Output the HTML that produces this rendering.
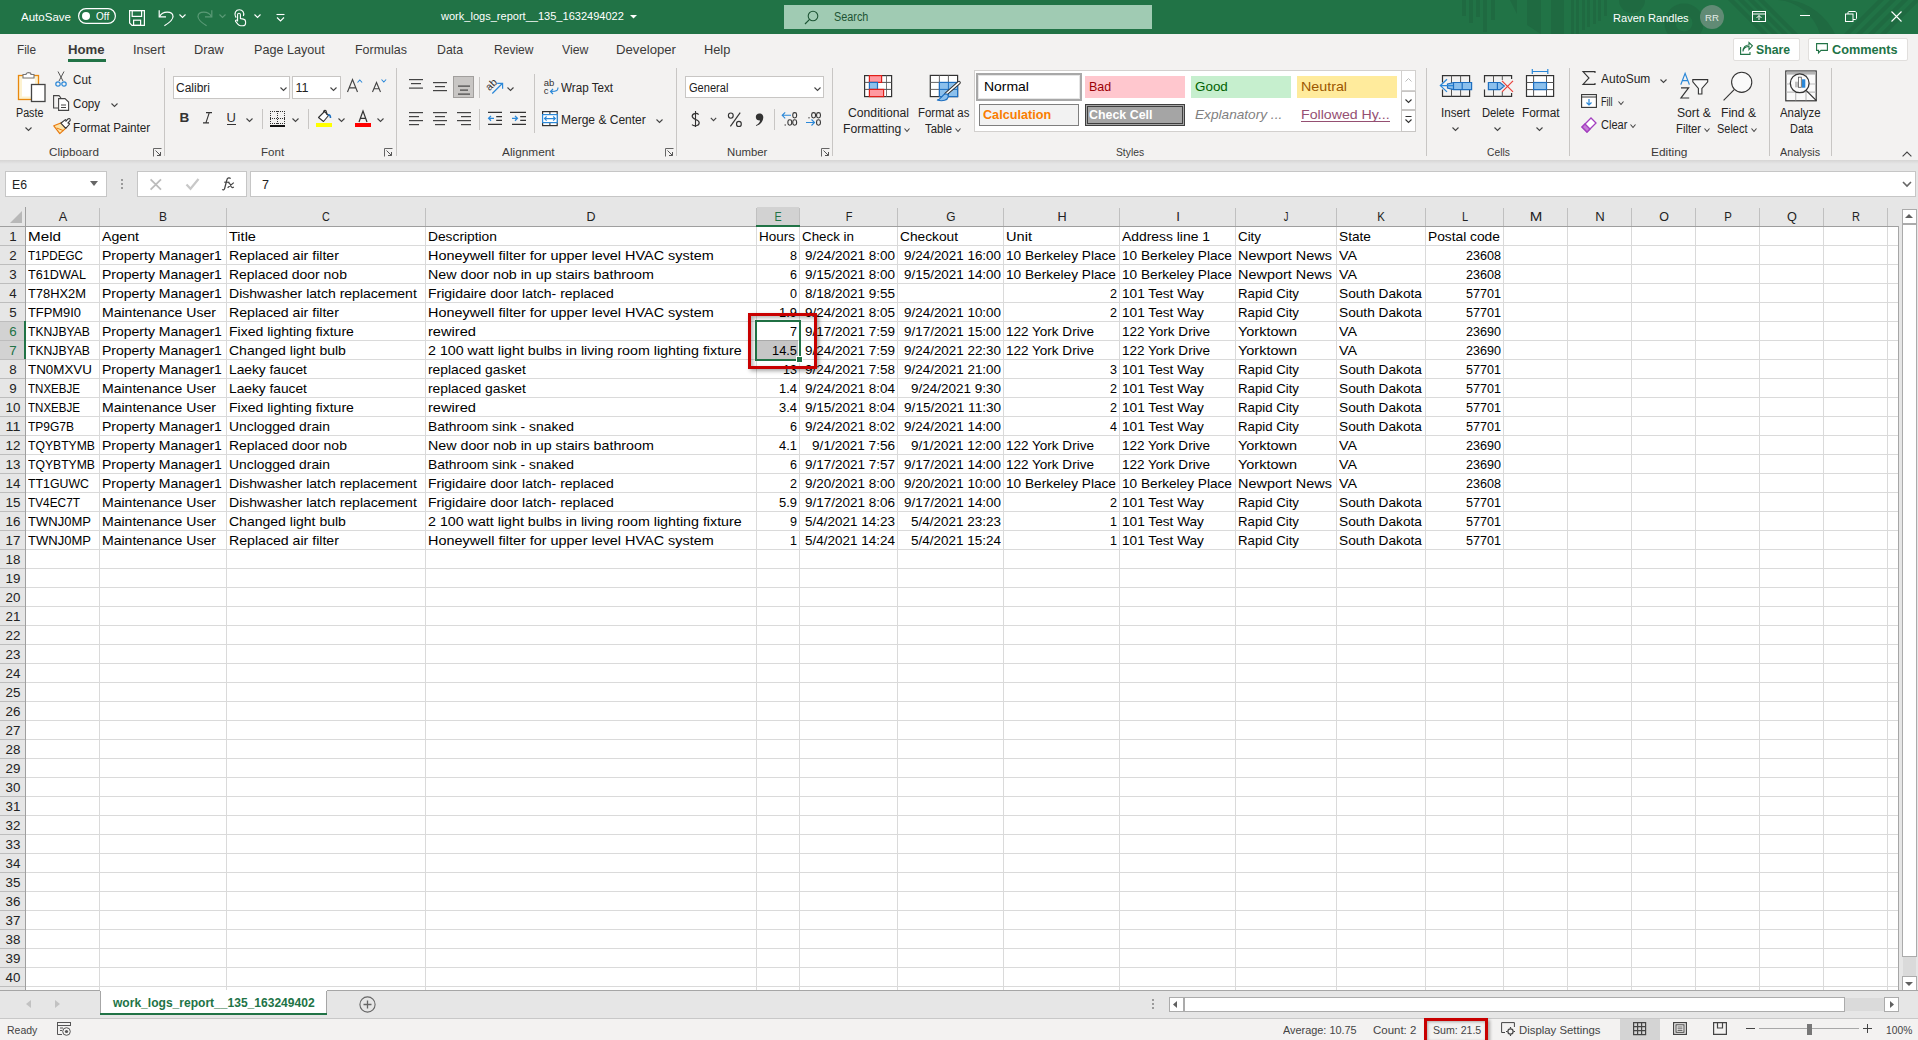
<!DOCTYPE html>
<html><head><meta charset="utf-8"><title>Excel</title>
<style>
html,body{margin:0;padding:0;}
body{width:1918px;height:1040px;overflow:hidden;position:relative;background:#e6e6e6;font-family:"Liberation Sans",sans-serif;}
.t{position:absolute;white-space:nowrap;}
.b{position:absolute;}
svg.b{overflow:visible;}
</style></head><body>

<div class="b" style="left:0px;top:0px;width:1918px;height:34px;background:#217346"></div>
<div class="b" style="left:0px;top:34px;width:1918px;height:126px;background:#f3f2f1"></div>
<div class="b" style="left:0px;top:160px;width:1918px;height:4px;background:linear-gradient(#d6d5d4,#e6e6e6)"></div>
<svg class="b" style="left:0;top:0" width="1918" height="34"><defs><clipPath id="tb"><rect x="0" y="0" width="1918" height="34"/></clipPath></defs><g clip-path="url(#tb)"><rect x="1462" y="0" width="4" height="16" fill="#1f6a41"/><rect x="1469" y="0" width="4" height="23" fill="#1f6a41"/><rect x="1476" y="0" width="4" height="17" fill="#1f6a41"/><rect x="1483" y="0" width="4" height="32" fill="#1f6a41"/><rect x="1491" y="0" width="4" height="20" fill="#1f6a41"/><polygon points="1510,0 1517,0 1517,14" fill="#1f6a41"/><polygon points="1527,0 1541,0 1541,34 1527,25" fill="#1f6a41"/><rect x="1551" y="0" width="13" height="34" fill="#1f6a41"/><rect x="1571" y="0" width="3" height="34" fill="#1f6a41"/><rect x="1576" y="0" width="3" height="34" fill="#1f6a41"/><rect x="1582" y="0" width="3" height="30" fill="#1f6a41"/><rect x="1587" y="0" width="3" height="27" fill="#1f6a41"/><rect x="1593" y="0" width="3" height="24" fill="#1f6a41"/><rect x="1598" y="0" width="3" height="21" fill="#1f6a41"/><rect x="1604" y="0" width="3" height="16" fill="#1f6a41"/><circle cx="1632" cy="0" r="13" fill="#1f6a41"/><circle cx="1684" cy="23" r="14" fill="none" stroke="#1f6a41" stroke-width="11"/><polygon points="1728,0 1734,0 1768,34 1762,34" fill="#1f6a41"/><polygon points="1738,0 1744,0 1778,34 1772,34" fill="#1f6a41"/><polygon points="1748,0 1754,0 1788,34 1782,34" fill="#1f6a41"/><polygon points="1758,0 1764,0 1798,34 1792,34" fill="#1f6a41"/><path d="M1790,0 A60,60 0 0 1 1835,34 L1820,34 A48,48 0 0 0 1778,0 Z" fill="#1f6a41"/><polygon points="1878,0 1884,0 1850,34 1844,34" fill="#1f6a41"/><polygon points="1890,0 1896,0 1862,34 1856,34" fill="#1f6a41"/><polygon points="1902,0 1908,0 1874,34 1868,34" fill="#1f6a41"/><polygon points="1914,0 1920,0 1886,34 1880,34" fill="#1f6a41"/></g></svg>
<div class="t" style="left:21.00px;top:7.48px;font-size:11.6px;line-height:20px;color:#ffffff;font-weight:normal;font-style:normal;transform:scaleX(0.9943);transform-origin:0 0;">AutoSave</div>
<svg class="b" style="left:78px;top:8px;" width="38" height="16" viewBox="0 0 38 16"><rect x="0.6" y="0.6" width="36.8" height="14.8" rx="7.4" fill="none" stroke="#fff" stroke-width="1.2"/><circle cx="8" cy="8" r="4" fill="#fff"/></svg>
<div class="t" style="left:96.00px;top:7.04px;font-size:10px;line-height:20px;color:#ffffff;font-weight:normal;font-style:normal;">Off</div>
<svg class="b" style="left:129px;top:10px;" width="17" height="17" viewBox="0 0 17 17"><path d="M0.6,0.6 H15.4 V15.4 H3 L0.6,13 Z" fill="none" stroke="#fff" stroke-width="1.2"/><rect x="3.2" y="0.6" width="9.4" height="5.8" fill="none" stroke="#fff" stroke-width="1.2"/><rect x="4.6" y="10.2" width="7" height="5.2" fill="none" stroke="#fff" stroke-width="1.2"/></svg>
<svg class="b" style="left:158px;top:9px;" width="17" height="18" viewBox="0 0 17 18"><path d="M1.2,1.2 V7.9 H8" fill="none" stroke="#fff" stroke-width="1.2"/><path d="M1.6,7.6 C4.5,1.5 14.8,1.8 15,7.4 C15.2,10.4 12.6,13 6.4,16.8" fill="none" stroke="#fff" stroke-width="1.2"/></svg>
<svg class="b" style="left:179px;top:14px;" width="7" height="4" viewBox="0 0 7 4"><path d="M0.5,0.5 L3.5,3.5 L6.5,0.5" fill="none" stroke="#fff" stroke-width="1.1"/></svg>
<svg class="b" style="left:197px;top:9px;" width="17" height="18" viewBox="0 0 17 18"><path d="M14.8,1.2 V7.9 H8" fill="none" stroke="#5a9a76" stroke-width="1.2"/><path d="M14.4,7.6 C11.5,1.5 1.2,1.8 1,7.4 C0.8,10.4 3.4,13 9.6,16.8" fill="none" stroke="#5a9a76" stroke-width="1.2"/></svg>
<svg class="b" style="left:219px;top:14px;" width="7" height="4" viewBox="0 0 7 4"><path d="M0.5,0.5 L3.5,3.5 L6.5,0.5" fill="none" stroke="#5a9a76" stroke-width="1.1"/></svg>
<svg class="b" style="left:233px;top:9px;" width="15" height="18" viewBox="0 0 15 18"><path d="M3.2,8.6 C0.4,4 3,0.8 6.4,0.8 C9.6,0.8 11.6,3.6 10.4,7" fill="none" stroke="#fff" stroke-width="1.1"/><path d="M4.6,12.4 V5.4 C4.6,3.8 7.4,3.8 7.4,5.4 V9.6 L10.4,10.1 C11.9,10.4 12.6,11.4 12.6,13 V14 C12.6,15.8 11.4,16.8 9.8,16.8 H7.6 C6.4,16.8 5.6,16.2 4.8,15.2 L2.6,12.4 C2,11.4 3.6,10.4 4.6,11.6" fill="none" stroke="#fff" stroke-width="1.1"/></svg>
<svg class="b" style="left:254px;top:14px;" width="7" height="4" viewBox="0 0 7 4"><path d="M0.5,0.5 L3.5,3.5 L6.5,0.5" fill="none" stroke="#fff" stroke-width="1.1"/></svg>
<svg class="b" style="left:276px;top:13px;" width="9" height="9" viewBox="0 0 9 9"><path d="M0.5,1.5 H8.5" stroke="#fff" stroke-width="1.1"/><path d="M1,4.5 L4.5,8 L8,4.5" fill="none" stroke="#fff" stroke-width="1.1"/></svg>
<div class="t" style="left:441.06px;top:6.21px;font-size:11.8px;line-height:20px;color:#ffffff;font-weight:normal;font-style:normal;transform:scaleX(0.9357);transform-origin:0 0;">work_logs_report__135_1632494022</div>
<svg class="b" style="left:630px;top:15px;" width="7" height="4" viewBox="0 0 7 4"><polygon points="0,0 7,0 3.5,3.5" fill="#fff"/></svg>
<div class="b" style="left:784px;top:5px;width:368px;height:24px;background:#a0cbb3"></div>
<svg class="b" style="left:804px;top:10px;" width="15" height="15" viewBox="0 0 15 15"><circle cx="9" cy="6" r="4.8" fill="none" stroke="#1d5434" stroke-width="1.1"/><path d="M5.6,9.4 L1,14" stroke="#1d5434" stroke-width="1.2"/></svg>
<div class="t" style="left:834.00px;top:7.34px;font-size:12px;line-height:20px;color:#1d5434;font-weight:normal;font-style:normal;transform:scaleX(0.9043);transform-origin:0 0;">Search</div>
<div class="t" style="left:1613.00px;top:7.98px;font-size:11.6px;line-height:20px;color:#ffffff;font-weight:normal;font-style:normal;transform:scaleX(0.9541);transform-origin:0 0;">Raven Randles</div>
<svg class="b" style="left:1700px;top:5px;" width="24" height="24" viewBox="0 0 24 24"><circle cx="12" cy="12" r="12" fill="#618b75"/></svg>
<div class="t" style="left:1512.00px;width:400px;text-align:center;top:7.67px;font-size:9.6px;line-height:20px;color:#e4ebe7;font-weight:normal;">RR</div>
<svg class="b" style="left:1752px;top:11px;" width="14" height="11" viewBox="0 0 14 11"><rect x="0.5" y="0.5" width="13" height="10" fill="none" stroke="#fff" stroke-width="1"/><path d="M0.5,3 H13.5" stroke="#fff" stroke-width="1"/><path d="M7,9 V4.5 M4.5,7 L7,4.5 L9.5,7" fill="none" stroke="#fff" stroke-width="1"/></svg>
<div class="b" style="left:1800px;top:15px;width:10px;height:1px;background:#fff"></div>
<svg class="b" style="left:1845px;top:11px;" width="12" height="11" viewBox="0 0 12 11"><rect x="0.5" y="3" width="7.5" height="7.5" fill="none" stroke="#fff" stroke-width="1"/><path d="M3,3 V1.5 C3,1 3.5,0.5 4,0.5 H10 C10.7,0.5 11.5,1.3 11.5,2 V7.5 C11.5,8 11,8.5 10.5,8.5 H8" fill="none" stroke="#fff" stroke-width="1"/></svg>
<svg class="b" style="left:1891px;top:11px;" width="11" height="11" viewBox="0 0 11 11"><path d="M0.5,0.5 L10.5,10.5 M10.5,0.5 L0.5,10.5" stroke="#fff" stroke-width="1.1"/></svg>
<div class="t" style="left:17.00px;top:39.56px;font-size:12.8px;line-height:20px;color:#3b3a39;font-weight:normal;font-style:normal;transform:scaleX(0.9220);transform-origin:0 0;">File</div>
<div class="t" style="left:132.60px;top:39.56px;font-size:12.8px;line-height:20px;color:#3b3a39;font-weight:normal;font-style:normal;transform:scaleX(1.0031);transform-origin:0 0;">Insert</div>
<div class="t" style="left:194.20px;top:39.56px;font-size:12.8px;line-height:20px;color:#3b3a39;font-weight:normal;font-style:normal;transform:scaleX(0.9971);transform-origin:0 0;">Draw</div>
<div class="t" style="left:254.00px;top:39.56px;font-size:12.8px;line-height:20px;color:#3b3a39;font-weight:normal;font-style:normal;transform:scaleX(0.9851);transform-origin:0 0;">Page Layout</div>
<div class="t" style="left:355.40px;top:39.56px;font-size:12.8px;line-height:20px;color:#3b3a39;font-weight:normal;font-style:normal;transform:scaleX(0.9742);transform-origin:0 0;">Formulas</div>
<div class="t" style="left:437.00px;top:39.56px;font-size:12.8px;line-height:20px;color:#3b3a39;font-weight:normal;font-style:normal;transform:scaleX(0.9604);transform-origin:0 0;">Data</div>
<div class="t" style="left:493.50px;top:39.56px;font-size:12.8px;line-height:20px;color:#3b3a39;font-weight:normal;font-style:normal;transform:scaleX(0.9408);transform-origin:0 0;">Review</div>
<div class="t" style="left:561.60px;top:39.56px;font-size:12.8px;line-height:20px;color:#3b3a39;font-weight:normal;font-style:normal;transform:scaleX(0.9593);transform-origin:0 0;">View</div>
<div class="t" style="left:616.00px;top:39.56px;font-size:12.8px;line-height:20px;color:#3b3a39;font-weight:normal;font-style:normal;transform:scaleX(1.0280);transform-origin:0 0;">Developer</div>
<div class="t" style="left:704.20px;top:39.56px;font-size:12.8px;line-height:20px;color:#3b3a39;font-weight:normal;font-style:normal;transform:scaleX(0.9998);transform-origin:0 0;">Help</div>
<div class="t" style="left:68.00px;top:39.56px;font-size:12.8px;line-height:20px;color:#3b3a39;font-weight:bold;font-style:normal;transform:scaleX(1.0286);transform-origin:0 0;">Home</div>
<div class="b" style="left:68px;top:59px;width:38px;height:3px;background:#217346"></div>
<div class="b" style="left:1733px;top:38px;width:65px;height:21px;background:#fff;border:1px solid #e1dfdd;border-radius:2px"></div>
<svg class="b" style="left:1740px;top:42px;" width="13" height="13" viewBox="0 0 13 13"><path d="M0.6,5 V12.4 H10 V10" fill="none" stroke="#217346" stroke-width="1.1"/><path d="M3,9.5 C3,6 6,4.5 9,4.5 V7.5 L12.4,3.8 L9,0.6 V3 C5.5,3 3,5.5 3,9.5 Z" fill="none" stroke="#217346" stroke-width="1.1"/></svg>
<div class="t" style="left:1756.00px;top:39.50px;font-size:13px;line-height:20px;color:#217346;font-weight:bold;font-style:normal;transform:scaleX(0.9408);transform-origin:0 0;">Share</div>
<div class="b" style="left:1808px;top:38px;width:98px;height:21px;background:#fff;border:1px solid #e1dfdd;border-radius:2px"></div>
<svg class="b" style="left:1816px;top:43px;" width="12" height="11" viewBox="0 0 12 11"><path d="M0.6,0.6 H11.4 V7.4 H5 L2.5,10 V7.4 H0.6 Z" fill="none" stroke="#217346" stroke-width="1.1"/></svg>
<div class="t" style="left:1832.00px;top:39.50px;font-size:13px;line-height:20px;color:#217346;font-weight:bold;font-style:normal;transform:scaleX(0.9775);transform-origin:0 0;">Comments</div>
<div class="b" style="left:164px;top:68px;width:1px;height:88px;background:#c8c6c4"></div>
<div class="b" style="left:396px;top:68px;width:1px;height:88px;background:#c8c6c4"></div>
<div class="b" style="left:676px;top:68px;width:1px;height:88px;background:#c8c6c4"></div>
<div class="b" style="left:832px;top:68px;width:1px;height:88px;background:#c8c6c4"></div>
<div class="b" style="left:1426px;top:68px;width:1px;height:88px;background:#c8c6c4"></div>
<div class="b" style="left:1569px;top:68px;width:1px;height:88px;background:#c8c6c4"></div>
<div class="b" style="left:1769px;top:68px;width:1px;height:88px;background:#c8c6c4"></div>
<div class="b" style="left:1831px;top:68px;width:1px;height:88px;background:#c8c6c4"></div>
<div class="t" style="left:48.75px;top:142.12px;font-size:11.2px;line-height:20px;color:#3b3a39;font-weight:normal;font-style:normal;transform:scaleX(1.0431);transform-origin:0 0;">Clipboard</div>
<div class="t" style="left:260.60px;top:142.12px;font-size:11.2px;line-height:20px;color:#3b3a39;font-weight:normal;font-style:normal;transform:scaleX(1.0313);transform-origin:0 0;">Font</div>
<div class="t" style="left:502.00px;top:142.12px;font-size:11.2px;line-height:20px;color:#3b3a39;font-weight:normal;font-style:normal;transform:scaleX(1.0586);transform-origin:0 0;">Alignment</div>
<div class="t" style="left:726.60px;top:142.12px;font-size:11.2px;line-height:20px;color:#3b3a39;font-weight:normal;font-style:normal;transform:scaleX(1.0147);transform-origin:0 0;">Number</div>
<div class="t" style="left:1115.50px;top:142.12px;font-size:11.2px;line-height:20px;color:#3b3a39;font-weight:normal;font-style:normal;transform:scaleX(0.9207);transform-origin:0 0;">Styles</div>
<div class="t" style="left:1486.60px;top:142.12px;font-size:11.2px;line-height:20px;color:#3b3a39;font-weight:normal;font-style:normal;transform:scaleX(0.9189);transform-origin:0 0;">Cells</div>
<div class="t" style="left:1651.30px;top:142.12px;font-size:11.2px;line-height:20px;color:#3b3a39;font-weight:normal;font-style:normal;transform:scaleX(1.0650);transform-origin:0 0;">Editing</div>
<div class="t" style="left:1780.40px;top:142.12px;font-size:11.2px;line-height:20px;color:#3b3a39;font-weight:normal;font-style:normal;transform:scaleX(0.9636);transform-origin:0 0;">Analysis</div>
<svg class="b" style="left:153px;top:148px;" width="9" height="9" viewBox="0 0 9 9"><path d="M0.5,8.5 V0.5 H8.5" fill="none" stroke="#666" stroke-width="1"/><path d="M2.5,2.5 L7.5,7.5 M4,7.5 H7.5 V4" fill="none" stroke="#555" stroke-width="1"/></svg>
<svg class="b" style="left:384px;top:148px;" width="9" height="9" viewBox="0 0 9 9"><path d="M0.5,8.5 V0.5 H8.5" fill="none" stroke="#666" stroke-width="1"/><path d="M2.5,2.5 L7.5,7.5 M4,7.5 H7.5 V4" fill="none" stroke="#555" stroke-width="1"/></svg>
<svg class="b" style="left:664.5px;top:148px;" width="9" height="9" viewBox="0 0 9 9"><path d="M0.5,8.5 V0.5 H8.5" fill="none" stroke="#666" stroke-width="1"/><path d="M2.5,2.5 L7.5,7.5 M4,7.5 H7.5 V4" fill="none" stroke="#555" stroke-width="1"/></svg>
<svg class="b" style="left:821px;top:148px;" width="9" height="9" viewBox="0 0 9 9"><path d="M0.5,8.5 V0.5 H8.5" fill="none" stroke="#666" stroke-width="1"/><path d="M2.5,2.5 L7.5,7.5 M4,7.5 H7.5 V4" fill="none" stroke="#555" stroke-width="1"/></svg>
<svg class="b" style="left:17px;top:71px;" width="30" height="32" viewBox="0 0 30 32"><rect x="1.5" y="4.5" width="20" height="24" fill="#fdf2d0" stroke="#e8880e" stroke-width="1.3"/><rect x="5" y="7.5" width="13" height="18" fill="#fff"/><path d="M6,7 V3.5 H9 C9,1 14,1 14,3.5 H17 V7 Z" fill="#fff" stroke="#777" stroke-width="1.1"/><rect x="14.5" y="13.5" width="13.5" height="17" fill="#fff" stroke="#444" stroke-width="1.3"/></svg>
<div class="t" style="left:15.60px;top:102.84px;font-size:12px;line-height:20px;color:#252423;font-weight:normal;font-style:normal;transform:scaleX(0.8937);transform-origin:0 0;">Paste</div>
<svg class="b" style="left:25px;top:127px;" width="7" height="4" viewBox="0 0 7 4"><path d="M0.5,0.5 L3.5,3.5 L6.5,0.5" fill="none" stroke="#444" stroke-width="1.1"/></svg>
<svg class="b" style="left:55px;top:71px;" width="12" height="16" viewBox="0 0 12 16"><path d="M3,0.5 L8,10 M9,0.5 L4,10" stroke="#555" stroke-width="1"/><circle cx="3" cy="13" r="2.2" fill="none" stroke="#2b88d8" stroke-width="1.2"/><circle cx="9" cy="13" r="2.2" fill="none" stroke="#2b88d8" stroke-width="1.2"/></svg>
<div class="t" style="left:72.50px;top:69.84px;font-size:12px;line-height:20px;color:#252423;font-weight:normal;font-style:normal;transform:scaleX(0.9700);transform-origin:0 0;">Cut</div>
<svg class="b" style="left:53px;top:95px;" width="17" height="16" viewBox="0 0 17 16"><path d="M5,13 H0.6 V0.6 H6 L8,3" fill="none" stroke="#444" stroke-width="1.1"/><path d="M5.6,3.6 H12 L15.6,7 V15.4 H5.6 Z" fill="#fff" stroke="#444" stroke-width="1.1"/><path d="M8,10 H13 M8,12.5 H13" stroke="#444" stroke-width="1"/></svg>
<div class="t" style="left:72.50px;top:93.84px;font-size:12px;line-height:20px;color:#252423;font-weight:normal;font-style:normal;transform:scaleX(0.9672);transform-origin:0 0;">Copy</div>
<svg class="b" style="left:110.5px;top:103px;" width="7" height="4" viewBox="0 0 7 4"><path d="M0.5,0.5 L3.5,3.5 L6.5,0.5" fill="none" stroke="#444" stroke-width="1.1"/></svg>
<svg class="b" style="left:53px;top:118px;" width="18" height="17" viewBox="0 0 18 17"><path d="M0.8,7.8 L8.4,4.8 L12.6,10.4 L6.8,15.6 Z" fill="#fde3a7" stroke="#e87a10" stroke-width="1.2" stroke-linejoin="round"/><path d="M3.6,10 L10.4,12.6" stroke="#e87a10" stroke-width="1"/><path d="M7.8,5.2 L12.4,1.6 L16.6,6 L12.8,10.4 Z" fill="#fff" stroke="#333" stroke-width="1.1" stroke-linejoin="round"/><path d="M12.6,3.6 L15,1 C15.6,0.4 16.6,0.4 17,1 C17.4,1.6 17.4,2.4 16.8,3 L14.6,5.4" fill="#fff" stroke="#333" stroke-width="1.1"/></svg>
<div class="t" style="left:72.50px;top:117.84px;font-size:12px;line-height:20px;color:#252423;font-weight:normal;font-style:normal;transform:scaleX(0.9732);transform-origin:0 0;">Format Painter</div>
<div class="b" style="left:173px;top:76px;width:115px;height:21px;background:#fff;border:1px solid #c8c6c4"></div>
<div class="t" style="left:176.00px;top:77.67px;font-size:12.5px;line-height:20px;color:#222;font-weight:normal;font-style:normal;transform:scaleX(0.9594);transform-origin:0 0;">Calibri</div>
<svg class="b" style="left:280px;top:87px;" width="7" height="4" viewBox="0 0 7 4"><path d="M0.5,0.5 L3.5,3.5 L6.5,0.5" fill="none" stroke="#444" stroke-width="1.1"/></svg>
<div class="b" style="left:292px;top:76px;width:47px;height:21px;background:#fff;border:1px solid #c8c6c4"></div>
<div class="t" style="left:295.50px;top:77.67px;font-size:12.5px;line-height:20px;color:#222;font-weight:normal;font-style:normal;">11</div>
<svg class="b" style="left:330px;top:87px;" width="7" height="4" viewBox="0 0 7 4"><path d="M0.5,0.5 L3.5,3.5 L6.5,0.5" fill="none" stroke="#444" stroke-width="1.1"/></svg>
<svg class="b" style="left:346px;top:78px;" width="18" height="15" viewBox="0 0 18 15"><path d="M1.5,14 L6.5,1.5 L11.5,14 M3.3,9.8 H9.7" fill="none" stroke="#444" stroke-width="1.15"/><path d="M11.5,4.5 L13.8,2 L16.1,4.5" fill="none" stroke="#2b88d8" stroke-width="1.1"/></svg>
<svg class="b" style="left:371px;top:78px;" width="16" height="15" viewBox="0 0 16 15"><path d="M1.5,14 L5.5,4.5 L9.5,14 M2.9,10.8 H8.1" fill="none" stroke="#444" stroke-width="1.1"/><path d="M10.5,1.5 L12.8,4 L15.1,1.5" fill="none" stroke="#2b88d8" stroke-width="1.1"/></svg>
<div class="t" style="left:179.50px;top:107.82px;font-size:13.5px;line-height:20px;color:#333;font-weight:bold;font-style:normal;">B</div>
<svg class="b" style="left:202px;top:112px;" width="11" height="12" viewBox="0 0 11 12"><path d="M4,0.6 H10 M1,10.9 H7 M7.3,0.6 L3.9,10.9" fill="none" stroke="#333" stroke-width="1.1"/></svg>
<div class="t" style="left:226.50px;top:108.00px;font-size:13px;line-height:20px;color:#333;font-weight:normal;font-style:normal;">U</div>
<div class="b" style="left:227px;top:124px;width:9px;height:1px;background:#333"></div>
<svg class="b" style="left:246px;top:118px;" width="7" height="4" viewBox="0 0 7 4"><path d="M0.5,0.5 L3.5,3.5 L6.5,0.5" fill="none" stroke="#444" stroke-width="1.1"/></svg>
<div class="b" style="left:262px;top:109px;width:1px;height:20px;background:#c8c6c4"></div>
<svg class="b" style="left:270px;top:111px;" width="16" height="17" viewBox="0 0 16 17"><rect x="0" y="0" width="1" height="1" fill="#333"/><rect x="0" y="12" width="1" height="1" fill="#333"/><rect x="0" y="0" width="1" height="1" fill="#333"/><rect x="14" y="0" width="1" height="1" fill="#333"/><rect x="7" y="0" width="1" height="1" fill="#333"/><rect x="0" y="7" width="1" height="1" fill="#333"/><rect x="2" y="0" width="1" height="1" fill="#333"/><rect x="2" y="12" width="1" height="1" fill="#333"/><rect x="0" y="2" width="1" height="1" fill="#333"/><rect x="14" y="2" width="1" height="1" fill="#333"/><rect x="7" y="2" width="1" height="1" fill="#333"/><rect x="2" y="7" width="1" height="1" fill="#333"/><rect x="4" y="0" width="1" height="1" fill="#333"/><rect x="4" y="12" width="1" height="1" fill="#333"/><rect x="0" y="4" width="1" height="1" fill="#333"/><rect x="14" y="4" width="1" height="1" fill="#333"/><rect x="7" y="4" width="1" height="1" fill="#333"/><rect x="4" y="7" width="1" height="1" fill="#333"/><rect x="6" y="0" width="1" height="1" fill="#333"/><rect x="6" y="12" width="1" height="1" fill="#333"/><rect x="0" y="6" width="1" height="1" fill="#333"/><rect x="14" y="6" width="1" height="1" fill="#333"/><rect x="7" y="6" width="1" height="1" fill="#333"/><rect x="6" y="7" width="1" height="1" fill="#333"/><rect x="8" y="0" width="1" height="1" fill="#333"/><rect x="8" y="12" width="1" height="1" fill="#333"/><rect x="0" y="8" width="1" height="1" fill="#333"/><rect x="14" y="8" width="1" height="1" fill="#333"/><rect x="7" y="8" width="1" height="1" fill="#333"/><rect x="8" y="7" width="1" height="1" fill="#333"/><rect x="10" y="0" width="1" height="1" fill="#333"/><rect x="10" y="12" width="1" height="1" fill="#333"/><rect x="0" y="10" width="1" height="1" fill="#333"/><rect x="14" y="10" width="1" height="1" fill="#333"/><rect x="7" y="10" width="1" height="1" fill="#333"/><rect x="10" y="7" width="1" height="1" fill="#333"/><rect x="12" y="0" width="1" height="1" fill="#333"/><rect x="12" y="12" width="1" height="1" fill="#333"/><rect x="0" y="12" width="1" height="1" fill="#333"/><rect x="14" y="12" width="1" height="1" fill="#333"/><rect x="7" y="12" width="1" height="1" fill="#333"/><rect x="12" y="7" width="1" height="1" fill="#333"/><rect x="14" y="0" width="1" height="1" fill="#333"/><rect x="14" y="12" width="1" height="1" fill="#333"/><rect x="0" y="14" width="1" height="1" fill="#333"/><rect x="14" y="14" width="1" height="1" fill="#333"/><rect x="7" y="14" width="1" height="1" fill="#333"/><rect x="14" y="7" width="1" height="1" fill="#333"/><rect x="14" y="14" width="1" height="1" fill="#333"/><rect x="0" y="14" width="15" height="2" fill="#111"/></svg>
<svg class="b" style="left:292px;top:118px;" width="7" height="4" viewBox="0 0 7 4"><path d="M0.5,0.5 L3.5,3.5 L6.5,0.5" fill="none" stroke="#444" stroke-width="1.1"/></svg>
<div class="b" style="left:308px;top:109px;width:1px;height:20px;background:#c8c6c4"></div>
<svg class="b" style="left:315px;top:109px;" width="18" height="19" viewBox="0 0 18 19"><path d="M3.5,8.5 L9.5,2.5 L13.5,6.5 L8.5,12.5 Z" fill="#fff" stroke="#333" stroke-width="1.1" stroke-linejoin="round"/><path d="M8.5,3.5 C8.5,1 11,0.5 11.5,3 L12,6" fill="none" stroke="#333" stroke-width="1.1"/><path d="M13,6 C14.5,5.5 15.5,6.5 15.5,9" fill="none" stroke="#1e6fc0" stroke-width="1.6"/><rect x="1" y="14" width="16" height="4" fill="#ffff00"/></svg>
<svg class="b" style="left:338px;top:118px;" width="7" height="4" viewBox="0 0 7 4"><path d="M0.5,0.5 L3.5,3.5 L6.5,0.5" fill="none" stroke="#444" stroke-width="1.1"/></svg>
<svg class="b" style="left:355px;top:109px;" width="17" height="19" viewBox="0 0 17 19"><path d="M4,13 L8,2 L12,13 M5.4,9.3 H10.6" fill="none" stroke="#333" stroke-width="1.2"/><rect x="0" y="14" width="16" height="4" fill="#ff0000"/></svg>
<svg class="b" style="left:377px;top:118px;" width="7" height="4" viewBox="0 0 7 4"><path d="M0.5,0.5 L3.5,3.5 L6.5,0.5" fill="none" stroke="#444" stroke-width="1.1"/></svg>
<svg class="b" style="left:408px;top:78px;" width="16" height="16" viewBox="0 0 16 16"><rect x="1" y="1" width="14" height="1.2" fill="#444"/><rect x="3" y="5" width="10" height="1.2" fill="#444"/><rect x="1" y="9.5" width="14" height="1.2" fill="#444"/></svg>
<svg class="b" style="left:432px;top:81px;" width="16" height="16" viewBox="0 0 16 16"><rect x="1" y="1" width="14" height="1.2" fill="#444"/><rect x="3" y="5" width="10" height="1.2" fill="#444"/><rect x="1" y="9" width="14" height="1.2" fill="#444"/></svg>
<div class="b" style="left:453px;top:76px;width:21px;height:22px;background:#c8c6c4;border:1px solid #a19f9d;box-sizing:border-box"></div>
<svg class="b" style="left:456px;top:84px;" width="16" height="16" viewBox="0 0 16 16"><rect x="2" y="1.5" width="12" height="1.2" fill="#444"/><rect x="4" y="5.5" width="8" height="1.2" fill="#444"/><rect x="2" y="9.5" width="12" height="1.2" fill="#444"/></svg>
<div class="b" style="left:479px;top:77px;width:1px;height:21px;background:#c8c6c4"></div>
<svg class="b" style="left:480px;top:72px;" width="30" height="30" viewBox="0 0 30 30"><text x="0" y="0" font-size="10.5" fill="#333" font-family="Liberation Sans" transform="translate(9.6,19.2) rotate(-45)">ab</text><path d="M12.3,21.5 L22.3,11.5 M17.2,11.3 H22.6 V16.7" fill="none" stroke="#2b88d8" stroke-width="1.2"/></svg>
<svg class="b" style="left:507px;top:87px;" width="7" height="4" viewBox="0 0 7 4"><path d="M0.5,0.5 L3.5,3.5 L6.5,0.5" fill="none" stroke="#444" stroke-width="1.1"/></svg>
<svg class="b" style="left:408px;top:112px;" width="16" height="16" viewBox="0 0 16 16"><rect x="1" y="0" width="14" height="1.2" fill="#444"/><rect x="1" y="4" width="10" height="1.2" fill="#444"/><rect x="1" y="8" width="14" height="1.2" fill="#444"/><rect x="1" y="12" width="10" height="1.2" fill="#444"/></svg>
<svg class="b" style="left:432px;top:112px;" width="16" height="16" viewBox="0 0 16 16"><rect x="1" y="0" width="14" height="1.2" fill="#444"/><rect x="3" y="4" width="10" height="1.2" fill="#444"/><rect x="1" y="8" width="14" height="1.2" fill="#444"/><rect x="3" y="12" width="10" height="1.2" fill="#444"/></svg>
<svg class="b" style="left:456px;top:112px;" width="16" height="16" viewBox="0 0 16 16"><rect x="1" y="0" width="14" height="1.2" fill="#444"/><rect x="5" y="4" width="10" height="1.2" fill="#444"/><rect x="1" y="8" width="14" height="1.2" fill="#444"/><rect x="5" y="12" width="10" height="1.2" fill="#444"/></svg>
<div class="b" style="left:479px;top:109px;width:1px;height:21px;background:#c8c6c4"></div>
<svg class="b" style="left:480px;top:102px;" width="50" height="26" viewBox="0 0 50 26"><path d="M8,10.4 H22 M16.2,14.6 H22 M16.2,18.4 H22 M8,22.4 H22 M30,10.4 H46 M40.2,14.6 H46 M40.2,18.4 H46 M32,22.4 H46" stroke="#333" stroke-width="1.1"/><path d="M14,16.3 H8.6 M11,13.9 L8.6,16.3 L11,18.7 M32,16.3 H37.4 M35,13.9 L37.4,16.3 L35,18.7" fill="none" stroke="#2b88d8" stroke-width="1.3"/></svg>
<div class="b" style="left:534px;top:74px;width:1px;height:59px;background:#c8c6c4"></div>
<svg class="b" style="left:540px;top:76px;" width="22" height="22" viewBox="0 0 22 22"><text x="3.8" y="10.2" font-size="9.5" fill="#333" font-family="Liberation Sans">ab</text><text x="3.8" y="17.6" font-size="9.5" fill="#333" font-family="Liberation Sans">c</text><path d="M17.8,11.5 C18.5,14 17,15.5 11,15.5 M13,13 L10.5,15.5 L13,18" fill="none" stroke="#2b88d8" stroke-width="1.2"/></svg>
<div class="t" style="left:561.00px;top:77.84px;font-size:12px;line-height:20px;color:#252423;font-weight:normal;font-style:normal;transform:scaleX(0.9705);transform-origin:0 0;">Wrap Text</div>
<svg class="b" style="left:541px;top:110px;" width="18" height="17" viewBox="0 0 18 17"><rect x="1.6" y="1.6" width="14.6" height="14" fill="#fff" stroke="#333" stroke-width="1.2"/><path d="M8.9,1.6 V4.6 M8.9,12.6 V15.6" stroke="#333" stroke-width="1.1"/><rect x="1.6" y="4.6" width="14.6" height="8" fill="#fff" stroke="#2b88d8" stroke-width="1.2"/><path d="M3.5,8.6 H14.3 M5.6,6.5 L3.5,8.6 L5.6,10.7 M12.2,6.5 L14.3,8.6 L12.2,10.7" fill="none" stroke="#2b88d8" stroke-width="1.2"/></svg>
<div class="t" style="left:561.00px;top:109.64px;font-size:12px;line-height:20px;color:#252423;font-weight:normal;font-style:normal;transform:scaleX(1.0009);transform-origin:0 0;">Merge &amp; Center</div>
<svg class="b" style="left:656px;top:119px;" width="7" height="4" viewBox="0 0 7 4"><path d="M0.5,0.5 L3.5,3.5 L6.5,0.5" fill="none" stroke="#444" stroke-width="1.1"/></svg>
<div class="b" style="left:685px;top:76px;width:139px;height:22px;background:#fff;border:1px solid #c8c6c4;box-sizing:border-box"></div>
<div class="t" style="left:688.50px;top:77.67px;font-size:12.5px;line-height:20px;color:#222;font-weight:normal;font-style:normal;transform:scaleX(0.8854);transform-origin:0 0;">General</div>
<svg class="b" style="left:814px;top:87px;" width="7" height="4" viewBox="0 0 7 4"><path d="M0.5,0.5 L3.5,3.5 L6.5,0.5" fill="none" stroke="#444" stroke-width="1.1"/></svg>
<svg class="b" style="left:680px;top:102px;" width="150" height="30" viewBox="0 0 150 30"><g fill="none" stroke="#333"><path d="M15.5,9 V25" stroke-width="1.1"/><path d="M18.6,12.6 C17.4,11 12.2,10.8 12.2,14.3 C12.2,17.8 19.2,17.2 19.2,20.8 C19.2,24.4 13.8,24.4 12,22.6" stroke-width="1.2"/><path d="M30.8,15.8 L33.5,18.6 L36.2,15.8" stroke="#444" stroke-width="1.1"/><ellipse cx="50.8" cy="13.6" rx="2.4" ry="2.6" stroke-width="1.15"/><ellipse cx="58.9" cy="21.9" rx="2.4" ry="2.6" stroke-width="1.15"/><path d="M60.2,10.6 L50.4,24.4" stroke-width="1.15"/><path d="M79.3,11.4 C82.3,11.4 83.4,13.6 83.3,15.6 C83.1,19.6 80.4,22.8 76.3,24 L75.9,23.2 C78.6,21.9 79.9,20.3 80.1,18.5 C77.6,18.6 75.8,17.2 75.8,14.9 C75.8,12.8 77.3,11.4 79.3,11.4 Z" fill="#333" stroke="none"/></g><path d="M102.2,13.3 H111 M105.2,10.3 L102.2,13.3 L105.2,16.3" fill="none" stroke="#2b88d8" stroke-width="1.1"/><rect x="112.8" y="10.6" width="3.8" height="5.4" rx="1.9" fill="none" stroke="#333" stroke-width="1.1"/><rect x="104.6" y="22.4" width="1.2" height="1.2" fill="#333"/><rect x="107.9" y="17.8" width="3.8" height="5.4" rx="1.9" fill="none" stroke="#333" stroke-width="1.1"/><rect x="112.8" y="17.8" width="3.8" height="5.4" rx="1.9" fill="none" stroke="#333" stroke-width="1.1"/><rect x="128.4" y="15.2" width="1.2" height="1.2" fill="#333"/><rect x="131.7" y="10.6" width="3.8" height="5.4" rx="1.9" fill="none" stroke="#333" stroke-width="1.1"/><rect x="136.6" y="10.6" width="3.8" height="5.4" rx="1.9" fill="none" stroke="#333" stroke-width="1.1"/><path d="M126,20.5 H134.5 M131.5,17.5 L134.5,20.5 L131.5,23.5" fill="none" stroke="#2b88d8" stroke-width="1.1"/><rect x="136.6" y="17.8" width="3.8" height="5.4" rx="1.9" fill="none" stroke="#333" stroke-width="1.1"/></svg>
<div class="b" style="left:774px;top:109px;width:1px;height:21px;background:#c8c6c4"></div>
<svg class="b" style="left:864px;top:75px;" width="29" height="23" viewBox="0 0 29 23"><rect x="0.6" y="0.6" width="27" height="21" fill="#fff" stroke="#333" stroke-width="1.2"/><path d="M22.5,0.6 V21.6" stroke="#777" stroke-width="1"/><path d="M0.6,7.4 H27.6 M0.6,14.4 H27.6" stroke="#555" stroke-width="1"/><rect x="5.4" y="0.6" width="12.2" height="6.8" fill="#ff99a0" stroke="#e0201a" stroke-width="1.2"/><rect x="5.4" y="7.4" width="8.1" height="7" fill="#8cc0ec" stroke="#1e6fc0" stroke-width="1.2"/><rect x="5.4" y="14.4" width="14.2" height="7.2" fill="#ff99a0" stroke="#e0201a" stroke-width="1.2"/></svg>
<div class="t" style="left:847.50px;top:102.84px;font-size:12px;line-height:20px;color:#252423;font-weight:normal;font-style:normal;transform:scaleX(1.0157);transform-origin:0 0;">Conditional</div>
<div class="t" style="left:843.30px;top:119.04px;font-size:12px;line-height:20px;color:#252423;font-weight:normal;font-style:normal;transform:scaleX(1.0146);transform-origin:0 0;">Formatting</div>
<svg class="b" style="left:904px;top:128px;" width="6" height="4" viewBox="0 0 6 4"><path d="M0.5,0.5 L3.0,3.5 L5.5,0.5" fill="none" stroke="#444" stroke-width="1.1"/></svg>
<svg class="b" style="left:929px;top:74px;" width="33" height="29" viewBox="0 0 33 29"><rect x="1.3" y="1.4" width="27.3" height="21.2" fill="#fff" stroke="#333" stroke-width="1.2"/><path d="M10.4,1.4 V22.6 M19.4,1.4 V8.4 M1.3,8.4 H10.4 M1.3,15.4 H10.4" stroke="#666" stroke-width="1"/><rect x="10.4" y="8.4" width="18.2" height="14.2" fill="#8cc0ec" stroke="#1e6fc0" stroke-width="1.2"/><path d="M19.4,8.4 V22.6 M10.4,15.4 H28.6" stroke="#1e6fc0" stroke-width="1"/><path d="M30,8.6 L17,20" stroke="#333" stroke-width="3.6" stroke-linecap="round"/><path d="M30,8.6 L17,20" stroke="#fff" stroke-width="1.6" stroke-linecap="round"/><path d="M8,26 C11,26 12.5,22.5 15,20.5 C17,19 19.8,20.5 19.2,23 C18.5,26 14,27.8 8,26 Z" fill="#8cc0ec" stroke="#1e6fc0" stroke-width="1.1"/></svg>
<div class="t" style="left:918.40px;top:102.84px;font-size:12px;line-height:20px;color:#252423;font-weight:normal;font-style:normal;transform:scaleX(0.9519);transform-origin:0 0;">Format as</div>
<div class="t" style="left:925.30px;top:119.04px;font-size:12px;line-height:20px;color:#252423;font-weight:normal;font-style:normal;transform:scaleX(0.9414);transform-origin:0 0;">Table</div>
<svg class="b" style="left:955px;top:128px;" width="6" height="4" viewBox="0 0 6 4"><path d="M0.5,0.5 L3.0,3.5 L5.5,0.5" fill="none" stroke="#444" stroke-width="1.1"/></svg>
<div class="b" style="left:974px;top:70px;width:442px;height:62px;background:#fff;border:1px solid #d2d0ce;box-sizing:border-box"></div>
<div class="b" style="left:976px;top:73px;width:106px;height:28px;background:#fff;border:2px solid #a8a8a8;box-sizing:border-box;box-shadow:inset 0 0 0 1px #e6e6e6"></div>
<div class="t" style="left:983.50px;top:77.32px;font-size:13.5px;line-height:20px;color:#000;font-weight:normal;font-style:normal;transform:scaleX(1.0336);transform-origin:0 0;">Normal</div>
<div class="b" style="left:1085px;top:76px;width:100px;height:22px;background:#ffc7ce"></div>
<div class="t" style="left:1089.00px;top:77.32px;font-size:13.5px;line-height:20px;color:#9c0006;font-weight:normal;font-style:normal;transform:scaleX(0.9238);transform-origin:0 0;">Bad</div>
<div class="b" style="left:1191px;top:76px;width:100px;height:22px;background:#c6efce"></div>
<div class="t" style="left:1195.00px;top:77.32px;font-size:13.5px;line-height:20px;color:#006100;font-weight:normal;font-style:normal;transform:scaleX(0.9937);transform-origin:0 0;">Good</div>
<div class="b" style="left:1297px;top:76px;width:100px;height:22px;background:#ffeb9c"></div>
<div class="t" style="left:1301.00px;top:77.32px;font-size:13.5px;line-height:20px;color:#9c5700;font-weight:normal;font-style:normal;transform:scaleX(1.0566);transform-origin:0 0;">Neutral</div>
<div class="b" style="left:979px;top:104px;width:100px;height:22px;background:#f2f2f2;border:1px solid #7f7f7f;box-sizing:border-box"></div>
<div class="t" style="left:983.00px;top:104.82px;font-size:13.5px;line-height:20px;color:#fa7d00;font-weight:bold;font-style:normal;transform:scaleX(0.9359);transform-origin:0 0;">Calculation</div>
<div class="b" style="left:1085px;top:104px;width:100px;height:22px;background:#a5a5a5;border:3px double #3f3f3f;box-sizing:border-box"></div>
<div class="t" style="left:1089.00px;top:104.82px;font-size:13.5px;line-height:20px;color:#fff;font-weight:bold;font-style:normal;transform:scaleX(0.9196);transform-origin:0 0;">Check Cell</div>
<div class="t" style="left:1195.30px;top:104.82px;font-size:13.5px;line-height:20px;color:#7f7f7f;font-weight:normal;font-style:italic;transform:scaleX(1.0108);transform-origin:0 0;">Explanatory ...</div>
<div class="t" style="left:1301.00px;top:104.82px;font-size:13.5px;line-height:20px;color:#954f72;font-weight:normal;font-style:normal;transform:scaleX(1.0484);transform-origin:0 0;">Followed Hy...</div>
<div class="b" style="left:1301px;top:121px;width:89px;height:1px;background:#954f72"></div>
<div class="b" style="left:1401px;top:70px;width:15px;height:21px;background:#fff;border:1px solid #d2d0ce;box-sizing:border-box"></div>
<svg class="b" style="left:1405px;top:78px;" width="7" height="4" viewBox="0 0 7 4"><path d="M0.5,3.5 L3.5,0.5 L6.5,3.5" fill="none" stroke="#bbb" stroke-width="1"/></svg>
<div class="b" style="left:1401px;top:91px;width:15px;height:19px;background:#fff;border:1px solid #c8c6c4;box-sizing:border-box"></div>
<svg class="b" style="left:1405px;top:99px;" width="7" height="4" viewBox="0 0 7 4"><path d="M0.5,0.5 L3.5,3.5 L6.5,0.5" fill="none" stroke="#333" stroke-width="1.1"/></svg>
<div class="b" style="left:1401px;top:110px;width:15px;height:22px;background:#fff;border:1px solid #c8c6c4;box-sizing:border-box"></div>
<svg class="b" style="left:1405px;top:116px;" width="7" height="8" viewBox="0 0 7 8"><path d="M0.5,0.5 H6.5" stroke="#333" stroke-width="1"/><path d="M0.5,3.5 L3.5,6.5 L6.5,3.5" fill="none" stroke="#333" stroke-width="1.1"/></svg>
<svg class="b" style="left:1436px;top:66px;" width="124" height="36" viewBox="0 0 124 36"><g fill="none" stroke-width="1.2"><path d="M6.5,16.5 V9.6 H33.6 V30.4 H6.5 V23.6" stroke="#333"/><path d="M15.5,9.6 V30.4 M24.6,9.6 V30.4" stroke="#555" stroke-width="1"/><path d="M11.5,18 L17.5,16.5 H35.6 V23.6 H17.5 L11.5,22 Z" fill="#8cc0ec" stroke="#1e6fc0"/><path d="M17.5,16.5 V23.6 M26.2,16.5 V23.6" stroke="#1e6fc0"/><path d="M11,13.3 L4.4,19.6 L11,25.9 M4.8,19.6 H17" stroke="#2b88d8" stroke-width="1.3"/><path d="M48.5,16.5 V9.6 H75.6 V13 M48.5,23.6 V30.4 H75.6 V27" stroke="#333"/><path d="M57.5,9.6 V16.5 M57.5,23.6 V30.4 M66.3,9.6 V14 M66.3,26 V30.4" stroke="#555" stroke-width="1"/><path d="M52.4,16.5 H64 L68.3,20 L64,23.6 H52.4 Z" fill="#8cc0ec" stroke="#1e6fc0"/><path d="M61.4,16.5 V23.6" stroke="#1e6fc0"/><path d="M66,14.9 L77,25.9 M77,14.9 L66,25.9" stroke="#e8403a" stroke-width="1.2"/><path d="M96.3,5.5 H111.8 M96.3,3 V8 M111.8,3 V8" stroke="#2b88d8"/><rect x="90.5" y="9.6" width="27.1" height="20.8" fill="#fff" stroke="#333"/><path d="M97.6,9.6 V30.4 M110.5,9.6 V30.4 M90.5,16.5 H117.6 M90.5,23.6 H117.6" stroke="#555" stroke-width="1"/><rect x="97.6" y="16.5" width="12.9" height="7.1" fill="#8cc0ec" stroke="#1e6fc0"/></g></svg>
<div class="t" style="left:1441.00px;top:102.84px;font-size:12px;line-height:20px;color:#252423;font-weight:normal;font-style:normal;transform:scaleX(0.9667);transform-origin:0 0;">Insert</div>
<svg class="b" style="left:1452px;top:127px;" width="7" height="4" viewBox="0 0 7 4"><path d="M0.5,0.5 L3.5,3.5 L6.5,0.5" fill="none" stroke="#444" stroke-width="1.1"/></svg>
<div class="t" style="left:1481.60px;top:102.84px;font-size:12px;line-height:20px;color:#252423;font-weight:normal;font-style:normal;transform:scaleX(0.9343);transform-origin:0 0;">Delete</div>
<svg class="b" style="left:1494px;top:127px;" width="7" height="4" viewBox="0 0 7 4"><path d="M0.5,0.5 L3.5,3.5 L6.5,0.5" fill="none" stroke="#444" stroke-width="1.1"/></svg>
<div class="t" style="left:1521.50px;top:102.84px;font-size:12px;line-height:20px;color:#252423;font-weight:normal;font-style:normal;transform:scaleX(0.9874);transform-origin:0 0;">Format</div>
<svg class="b" style="left:1536px;top:127px;" width="7" height="4" viewBox="0 0 7 4"><path d="M0.5,0.5 L3.5,3.5 L6.5,0.5" fill="none" stroke="#444" stroke-width="1.1"/></svg>
<svg class="b" style="left:1582px;top:71px;" width="14" height="14" viewBox="0 0 14 14"><path d="M13,2 V0.6 H1 L7,7 L1,13.4 H13 V12" fill="none" stroke="#333" stroke-width="1.1"/></svg>
<div class="t" style="left:1600.50px;top:68.84px;font-size:12px;line-height:20px;color:#252423;font-weight:normal;font-style:normal;transform:scaleX(0.9984);transform-origin:0 0;">AutoSum</div>
<svg class="b" style="left:1660px;top:79px;" width="7" height="4" viewBox="0 0 7 4"><path d="M0.5,0.5 L3.5,3.5 L6.5,0.5" fill="none" stroke="#444" stroke-width="1.1"/></svg>
<svg class="b" style="left:1581px;top:94px;" width="16" height="14" viewBox="0 0 16 14"><rect x="0.6" y="0.6" width="14.8" height="12.8" fill="#fff" stroke="#333" stroke-width="1.1"/><path d="M0.6,3 H15.4" stroke="#333" stroke-width="1"/><path d="M8,5 V11 M5.5,8.5 L8,11 L10.5,8.5" fill="none" stroke="#2b88d8" stroke-width="1.2"/></svg>
<div class="t" style="left:1600.50px;top:91.84px;font-size:12px;line-height:20px;color:#252423;font-weight:normal;font-style:normal;transform:scaleX(0.7516);transform-origin:0 0;">Fill</div>
<svg class="b" style="left:1618px;top:101px;" width="6" height="4" viewBox="0 0 6 4"><path d="M0.5,0.5 L3.0,3.5 L5.5,0.5" fill="none" stroke="#444" stroke-width="1.1"/></svg>
<svg class="b" style="left:1581px;top:116px;" width="16" height="16" viewBox="0 0 16 16"><path d="M1,11 L6,16 L15,7 L10,2 Z" fill="#fff" stroke="#a33fbf" stroke-width="1.3"/><path d="M1,11 L6,16 L9,13 L4,8 Z" fill="#c67ed8" stroke="#a33fbf" stroke-width="1.3"/></svg>
<div class="t" style="left:1600.50px;top:114.64px;font-size:12px;line-height:20px;color:#252423;font-weight:normal;font-style:normal;transform:scaleX(0.9170);transform-origin:0 0;">Clear</div>
<svg class="b" style="left:1630px;top:124px;" width="6" height="4" viewBox="0 0 6 4"><path d="M0.5,0.5 L3.0,3.5 L5.5,0.5" fill="none" stroke="#444" stroke-width="1.1"/></svg>
<svg class="b" style="left:1676px;top:66px;" width="154" height="40" viewBox="0 0 154 40"><g fill="none"><path d="M4.8,18.6 L9.1,7.4 L13.4,18.6 M6.3,14.7 H11.9" stroke="#2b88d8" stroke-width="1.25"/><path d="M5,21.9 H12.6 L5,32 H13.2" stroke="#333" stroke-width="1.2"/><path d="M16.8,13.6 H31.7 V15.8 L25.9,22.4 V28 H22.4 V22.4 L16.8,15.8 Z" fill="#fafafa" stroke="#333" stroke-width="1.1"/><circle cx="65.7" cy="16.3" r="10.1" fill="#fafafa" stroke="#333" stroke-width="1.1"/><path d="M58.2,23.6 L47.6,34.4" stroke="#333" stroke-width="1.1"/><rect x="109.8" y="5" width="30.4" height="29.8" fill="#fafafa" stroke="#333" stroke-width="1.2"/><rect x="110.4" y="5.6" width="29.2" height="3" fill="#b4b4b4"/><path d="M110.4,18 H139.6 M110.4,26.1 H139.6 M119.7,8.6 V34.2 M130,8.6 V34.2" stroke="#bdbdbd" stroke-width="1.2"/><circle cx="123.7" cy="17.3" r="9.4" fill="#fafafa" stroke="#333" stroke-width="1.3"/><rect x="119" y="15.7" width="3.2" height="5.6" fill="#c0c0c0"/><rect x="122.5" y="11.2" width="2.8" height="10.1" fill="#fff" stroke="#555" stroke-width="0.8"/><rect x="126" y="13.3" width="3.3" height="8.4" fill="#2b88d8"/><path d="M130.3,24.6 L140.4,34.6" stroke="#333" stroke-width="1.3"/></g></svg>
<div class="t" style="left:1677.00px;top:102.84px;font-size:12px;line-height:20px;color:#252423;font-weight:normal;font-style:normal;transform:scaleX(1.0132);transform-origin:0 0;">Sort &amp;</div>
<div class="t" style="left:1675.60px;top:119.04px;font-size:12px;line-height:20px;color:#252423;font-weight:normal;font-style:normal;transform:scaleX(0.9384);transform-origin:0 0;">Filter</div>
<svg class="b" style="left:1704px;top:128px;" width="6" height="4" viewBox="0 0 6 4"><path d="M0.5,0.5 L3.0,3.5 L5.5,0.5" fill="none" stroke="#444" stroke-width="1.1"/></svg>
<div class="t" style="left:1720.50px;top:102.84px;font-size:12px;line-height:20px;color:#252423;font-weight:normal;font-style:normal;transform:scaleX(1.0121);transform-origin:0 0;">Find &amp;</div>
<div class="t" style="left:1717.30px;top:119.04px;font-size:12px;line-height:20px;color:#252423;font-weight:normal;font-style:normal;transform:scaleX(0.9143);transform-origin:0 0;">Select</div>
<svg class="b" style="left:1751px;top:128px;" width="6" height="4" viewBox="0 0 6 4"><path d="M0.5,0.5 L3.0,3.5 L5.5,0.5" fill="none" stroke="#444" stroke-width="1.1"/></svg>
<div class="t" style="left:1780.40px;top:102.84px;font-size:12px;line-height:20px;color:#252423;font-weight:normal;font-style:normal;transform:scaleX(0.9504);transform-origin:0 0;">Analyze</div>
<div class="t" style="left:1789.70px;top:119.04px;font-size:12px;line-height:20px;color:#252423;font-weight:normal;font-style:normal;transform:scaleX(0.9102);transform-origin:0 0;">Data</div>
<svg class="b" style="left:1902px;top:151px;" width="10" height="6" viewBox="0 0 10 6"><path d="M0.6,5.4 L5,1 L9.4,5.4" fill="none" stroke="#444" stroke-width="1.1"/></svg>
<div class="b" style="left:26px;top:227px;width:1872px;height:763px;background:#fff"></div>
<svg class="b" style="left:0;top:0" width="1918" height="1040"><rect x="99" y="227" width="1" height="763" fill="#dadada"/><rect x="226" y="227" width="1" height="763" fill="#dadada"/><rect x="425" y="227" width="1" height="763" fill="#dadada"/><rect x="756" y="227" width="1" height="763" fill="#dadada"/><rect x="799" y="227" width="1" height="763" fill="#dadada"/><rect x="897" y="227" width="1" height="763" fill="#dadada"/><rect x="1003" y="227" width="1" height="763" fill="#dadada"/><rect x="1119" y="227" width="1" height="763" fill="#dadada"/><rect x="1235" y="227" width="1" height="763" fill="#dadada"/><rect x="1336" y="227" width="1" height="763" fill="#dadada"/><rect x="1425" y="227" width="1" height="763" fill="#dadada"/><rect x="1503" y="227" width="1" height="763" fill="#dadada"/><rect x="1567" y="227" width="1" height="763" fill="#dadada"/><rect x="1631" y="227" width="1" height="763" fill="#dadada"/><rect x="1695" y="227" width="1" height="763" fill="#dadada"/><rect x="1759" y="227" width="1" height="763" fill="#dadada"/><rect x="1823" y="227" width="1" height="763" fill="#dadada"/><rect x="1887" y="227" width="1" height="763" fill="#dadada"/><rect x="26" y="245" width="1872" height="1" fill="#dadada"/><rect x="26" y="264" width="1872" height="1" fill="#dadada"/><rect x="26" y="283" width="1872" height="1" fill="#dadada"/><rect x="26" y="302" width="1872" height="1" fill="#dadada"/><rect x="26" y="321" width="1872" height="1" fill="#dadada"/><rect x="26" y="340" width="1872" height="1" fill="#dadada"/><rect x="26" y="359" width="1872" height="1" fill="#dadada"/><rect x="26" y="378" width="1872" height="1" fill="#dadada"/><rect x="26" y="397" width="1872" height="1" fill="#dadada"/><rect x="26" y="416" width="1872" height="1" fill="#dadada"/><rect x="26" y="435" width="1872" height="1" fill="#dadada"/><rect x="26" y="454" width="1872" height="1" fill="#dadada"/><rect x="26" y="473" width="1872" height="1" fill="#dadada"/><rect x="26" y="492" width="1872" height="1" fill="#dadada"/><rect x="26" y="511" width="1872" height="1" fill="#dadada"/><rect x="26" y="530" width="1872" height="1" fill="#dadada"/><rect x="26" y="549" width="1872" height="1" fill="#dadada"/><rect x="26" y="568" width="1872" height="1" fill="#dadada"/><rect x="26" y="587" width="1872" height="1" fill="#dadada"/><rect x="26" y="606" width="1872" height="1" fill="#dadada"/><rect x="26" y="625" width="1872" height="1" fill="#dadada"/><rect x="26" y="644" width="1872" height="1" fill="#dadada"/><rect x="26" y="663" width="1872" height="1" fill="#dadada"/><rect x="26" y="682" width="1872" height="1" fill="#dadada"/><rect x="26" y="701" width="1872" height="1" fill="#dadada"/><rect x="26" y="720" width="1872" height="1" fill="#dadada"/><rect x="26" y="739" width="1872" height="1" fill="#dadada"/><rect x="26" y="758" width="1872" height="1" fill="#dadada"/><rect x="26" y="777" width="1872" height="1" fill="#dadada"/><rect x="26" y="796" width="1872" height="1" fill="#dadada"/><rect x="26" y="815" width="1872" height="1" fill="#dadada"/><rect x="26" y="834" width="1872" height="1" fill="#dadada"/><rect x="26" y="853" width="1872" height="1" fill="#dadada"/><rect x="26" y="872" width="1872" height="1" fill="#dadada"/><rect x="26" y="891" width="1872" height="1" fill="#dadada"/><rect x="26" y="910" width="1872" height="1" fill="#dadada"/><rect x="26" y="929" width="1872" height="1" fill="#dadada"/><rect x="26" y="948" width="1872" height="1" fill="#dadada"/><rect x="26" y="967" width="1872" height="1" fill="#dadada"/><rect x="26" y="986" width="1872" height="1" fill="#dadada"/></svg>
<div class="b" style="left:757px;top:341px;width:41px;height:18px;background:#c6c6c6"></div>
<div class="b" style="left:757px;top:340px;width:41px;height:1px;background:#a9a9a9"></div>
<div class="t" style="left:27.50px;top:226.93px;font-size:13.2px;line-height:20px;color:#000;font-weight:normal;font-style:normal;transform:scaleX(1.1534);transform-origin:0 0;">Meld</div>
<div class="t" style="left:101.50px;top:226.93px;font-size:13.2px;line-height:20px;color:#000;font-weight:normal;font-style:normal;transform:scaleX(1.0726);transform-origin:0 0;">Agent</div>
<div class="t" style="left:228.50px;top:226.93px;font-size:13.2px;line-height:20px;color:#000;font-weight:normal;font-style:normal;transform:scaleX(1.1044);transform-origin:0 0;">Title</div>
<div class="t" style="left:427.50px;top:226.93px;font-size:13.2px;line-height:20px;color:#000;font-weight:normal;font-style:normal;transform:scaleX(1.0450);transform-origin:0 0;">Description</div>
<div class="t" style="left:758.50px;top:226.93px;font-size:13.2px;line-height:20px;color:#000;font-weight:normal;font-style:normal;transform:scaleX(1.0224);transform-origin:0 0;">Hours</div>
<div class="t" style="left:801.50px;top:226.93px;font-size:13.2px;line-height:20px;color:#000;font-weight:normal;font-style:normal;transform:scaleX(1.0125);transform-origin:0 0;">Check in</div>
<div class="t" style="left:899.50px;top:226.93px;font-size:13.2px;line-height:20px;color:#000;font-weight:normal;font-style:normal;transform:scaleX(1.0401);transform-origin:0 0;">Checkout</div>
<div class="t" style="left:1005.50px;top:226.93px;font-size:13.2px;line-height:20px;color:#000;font-weight:normal;font-style:normal;transform:scaleX(1.1076);transform-origin:0 0;">Unit</div>
<div class="t" style="left:1121.50px;top:226.93px;font-size:13.2px;line-height:20px;color:#000;font-weight:normal;font-style:normal;transform:scaleX(1.0520);transform-origin:0 0;">Address line 1</div>
<div class="t" style="left:1237.50px;top:226.93px;font-size:13.2px;line-height:20px;color:#000;font-weight:normal;font-style:normal;transform:scaleX(1.0118);transform-origin:0 0;">City</div>
<div class="t" style="left:1338.50px;top:226.93px;font-size:13.2px;line-height:20px;color:#000;font-weight:normal;font-style:normal;transform:scaleX(1.0382);transform-origin:0 0;">State</div>
<div class="t" style="left:1427.50px;top:226.93px;font-size:13.2px;line-height:20px;color:#000;font-weight:normal;font-style:normal;transform:scaleX(1.0438);transform-origin:0 0;">Postal code</div>
<div class="t" style="left:27.50px;top:245.93px;font-size:13.2px;line-height:20px;color:#000;font-weight:normal;font-style:normal;transform:scaleX(0.8822);transform-origin:0 0;">T1PDEGC</div>
<div class="t" style="left:101.50px;top:245.93px;font-size:13.2px;line-height:20px;color:#000;font-weight:normal;font-style:normal;transform:scaleX(1.0620);transform-origin:0 0;">Property Manager1</div>
<div class="t" style="left:228.50px;top:245.93px;font-size:13.2px;line-height:20px;color:#000;font-weight:normal;font-style:normal;transform:scaleX(1.0709);transform-origin:0 0;">Replaced air filter</div>
<div class="t" style="left:427.50px;top:245.93px;font-size:13.2px;line-height:20px;color:#000;font-weight:normal;font-style:normal;transform:scaleX(1.0930);transform-origin:0 0;">Honeywell filter for upper level HVAC system</div>
<div class="t" style="left:397.00px;width:400px;text-align:right;top:245.93px;font-size:13.2px;line-height:20px;color:#000;font-weight:normal;transform:scaleX(0.9535);transform-origin:100% 0;">8</div>
<div class="t" style="left:495.00px;width:400px;text-align:right;top:245.93px;font-size:13.2px;line-height:20px;color:#000;font-weight:normal;transform:scaleX(1.0218);transform-origin:100% 0;">9/24/2021 8:00</div>
<div class="t" style="left:601.00px;width:400px;text-align:right;top:245.93px;font-size:13.2px;line-height:20px;color:#000;font-weight:normal;transform:scaleX(1.0165);transform-origin:100% 0;">9/24/2021 16:00</div>
<div class="t" style="left:1005.50px;top:245.93px;font-size:13.2px;line-height:20px;color:#000;font-weight:normal;font-style:normal;transform:scaleX(1.0339);transform-origin:0 0;">10 Berkeley Place</div>
<div class="t" style="left:1121.50px;top:245.93px;font-size:13.2px;line-height:20px;color:#000;font-weight:normal;font-style:normal;transform:scaleX(1.0339);transform-origin:0 0;">10 Berkeley Place</div>
<div class="t" style="left:1237.50px;top:245.93px;font-size:13.2px;line-height:20px;color:#000;font-weight:normal;font-style:normal;transform:scaleX(1.0952);transform-origin:0 0;">Newport News</div>
<div class="t" style="left:1338.50px;top:245.93px;font-size:13.2px;line-height:20px;color:#000;font-weight:normal;font-style:normal;transform:scaleX(1.0824);transform-origin:0 0;">VA</div>
<div class="t" style="left:1101.00px;width:400px;text-align:right;top:245.93px;font-size:13.2px;line-height:20px;color:#000;font-weight:normal;transform:scaleX(0.9535);transform-origin:100% 0;">23608</div>
<div class="t" style="left:27.50px;top:264.93px;font-size:13.2px;line-height:20px;color:#000;font-weight:normal;font-style:normal;transform:scaleX(0.9604);transform-origin:0 0;">T61DWAL</div>
<div class="t" style="left:101.50px;top:264.93px;font-size:13.2px;line-height:20px;color:#000;font-weight:normal;font-style:normal;transform:scaleX(1.0620);transform-origin:0 0;">Property Manager1</div>
<div class="t" style="left:228.50px;top:264.93px;font-size:13.2px;line-height:20px;color:#000;font-weight:normal;font-style:normal;transform:scaleX(1.0578);transform-origin:0 0;">Replaced door nob</div>
<div class="t" style="left:427.50px;top:264.93px;font-size:13.2px;line-height:20px;color:#000;font-weight:normal;font-style:normal;transform:scaleX(1.0807);transform-origin:0 0;">New door nob in up stairs bathroom</div>
<div class="t" style="left:397.00px;width:400px;text-align:right;top:264.93px;font-size:13.2px;line-height:20px;color:#000;font-weight:normal;transform:scaleX(0.9535);transform-origin:100% 0;">6</div>
<div class="t" style="left:495.00px;width:400px;text-align:right;top:264.93px;font-size:13.2px;line-height:20px;color:#000;font-weight:normal;transform:scaleX(1.0218);transform-origin:100% 0;">9/15/2021 8:00</div>
<div class="t" style="left:601.00px;width:400px;text-align:right;top:264.93px;font-size:13.2px;line-height:20px;color:#000;font-weight:normal;transform:scaleX(1.0165);transform-origin:100% 0;">9/15/2021 14:00</div>
<div class="t" style="left:1005.50px;top:264.93px;font-size:13.2px;line-height:20px;color:#000;font-weight:normal;font-style:normal;transform:scaleX(1.0339);transform-origin:0 0;">10 Berkeley Place</div>
<div class="t" style="left:1121.50px;top:264.93px;font-size:13.2px;line-height:20px;color:#000;font-weight:normal;font-style:normal;transform:scaleX(1.0339);transform-origin:0 0;">10 Berkeley Place</div>
<div class="t" style="left:1237.50px;top:264.93px;font-size:13.2px;line-height:20px;color:#000;font-weight:normal;font-style:normal;transform:scaleX(1.0952);transform-origin:0 0;">Newport News</div>
<div class="t" style="left:1338.50px;top:264.93px;font-size:13.2px;line-height:20px;color:#000;font-weight:normal;font-style:normal;transform:scaleX(1.0824);transform-origin:0 0;">VA</div>
<div class="t" style="left:1101.00px;width:400px;text-align:right;top:264.93px;font-size:13.2px;line-height:20px;color:#000;font-weight:normal;transform:scaleX(0.9535);transform-origin:100% 0;">23608</div>
<div class="t" style="left:27.50px;top:283.93px;font-size:13.2px;line-height:20px;color:#000;font-weight:normal;font-style:normal;transform:scaleX(0.9761);transform-origin:0 0;">T78HX2M</div>
<div class="t" style="left:101.50px;top:283.93px;font-size:13.2px;line-height:20px;color:#000;font-weight:normal;font-style:normal;transform:scaleX(1.0620);transform-origin:0 0;">Property Manager1</div>
<div class="t" style="left:228.50px;top:283.93px;font-size:13.2px;line-height:20px;color:#000;font-weight:normal;font-style:normal;transform:scaleX(1.0632);transform-origin:0 0;">Dishwasher latch replacement</div>
<div class="t" style="left:427.50px;top:283.93px;font-size:13.2px;line-height:20px;color:#000;font-weight:normal;font-style:normal;transform:scaleX(1.0607);transform-origin:0 0;">Frigidaire door latch- replaced</div>
<div class="t" style="left:397.00px;width:400px;text-align:right;top:283.93px;font-size:13.2px;line-height:20px;color:#000;font-weight:normal;transform:scaleX(0.9535);transform-origin:100% 0;">0</div>
<div class="t" style="left:495.00px;width:400px;text-align:right;top:283.93px;font-size:13.2px;line-height:20px;color:#000;font-weight:normal;transform:scaleX(1.0218);transform-origin:100% 0;">8/18/2021 9:55</div>
<div class="t" style="left:717.00px;width:400px;text-align:right;top:283.93px;font-size:13.2px;line-height:20px;color:#000;font-weight:normal;transform:scaleX(0.9535);transform-origin:100% 0;">2</div>
<div class="t" style="left:1121.50px;top:283.93px;font-size:13.2px;line-height:20px;color:#000;font-weight:normal;font-style:normal;transform:scaleX(1.0348);transform-origin:0 0;">101 Test Way</div>
<div class="t" style="left:1237.50px;top:283.93px;font-size:13.2px;line-height:20px;color:#000;font-weight:normal;font-style:normal;transform:scaleX(1.0018);transform-origin:0 0;">Rapid City</div>
<div class="t" style="left:1338.50px;top:283.93px;font-size:13.2px;line-height:20px;color:#000;font-weight:normal;font-style:normal;transform:scaleX(1.0377);transform-origin:0 0;">South Dakota</div>
<div class="t" style="left:1101.00px;width:400px;text-align:right;top:283.93px;font-size:13.2px;line-height:20px;color:#000;font-weight:normal;transform:scaleX(0.9535);transform-origin:100% 0;">57701</div>
<div class="t" style="left:27.50px;top:302.93px;font-size:13.2px;line-height:20px;color:#000;font-weight:normal;font-style:normal;transform:scaleX(0.9765);transform-origin:0 0;">TFPM9I0</div>
<div class="t" style="left:101.50px;top:302.93px;font-size:13.2px;line-height:20px;color:#000;font-weight:normal;font-style:normal;transform:scaleX(1.0642);transform-origin:0 0;">Maintenance User</div>
<div class="t" style="left:228.50px;top:302.93px;font-size:13.2px;line-height:20px;color:#000;font-weight:normal;font-style:normal;transform:scaleX(1.0709);transform-origin:0 0;">Replaced air filter</div>
<div class="t" style="left:427.50px;top:302.93px;font-size:13.2px;line-height:20px;color:#000;font-weight:normal;font-style:normal;transform:scaleX(1.0930);transform-origin:0 0;">Honeywell filter for upper level HVAC system</div>
<div class="t" style="left:397.00px;width:400px;text-align:right;top:302.93px;font-size:13.2px;line-height:20px;color:#000;font-weight:normal;transform:scaleX(0.9809);transform-origin:100% 0;">1.9</div>
<div class="t" style="left:495.00px;width:400px;text-align:right;top:302.93px;font-size:13.2px;line-height:20px;color:#000;font-weight:normal;transform:scaleX(1.0218);transform-origin:100% 0;">9/24/2021 8:05</div>
<div class="t" style="left:601.00px;width:400px;text-align:right;top:302.93px;font-size:13.2px;line-height:20px;color:#000;font-weight:normal;transform:scaleX(1.0165);transform-origin:100% 0;">9/24/2021 10:00</div>
<div class="t" style="left:717.00px;width:400px;text-align:right;top:302.93px;font-size:13.2px;line-height:20px;color:#000;font-weight:normal;transform:scaleX(0.9535);transform-origin:100% 0;">2</div>
<div class="t" style="left:1121.50px;top:302.93px;font-size:13.2px;line-height:20px;color:#000;font-weight:normal;font-style:normal;transform:scaleX(1.0348);transform-origin:0 0;">101 Test Way</div>
<div class="t" style="left:1237.50px;top:302.93px;font-size:13.2px;line-height:20px;color:#000;font-weight:normal;font-style:normal;transform:scaleX(1.0018);transform-origin:0 0;">Rapid City</div>
<div class="t" style="left:1338.50px;top:302.93px;font-size:13.2px;line-height:20px;color:#000;font-weight:normal;font-style:normal;transform:scaleX(1.0377);transform-origin:0 0;">South Dakota</div>
<div class="t" style="left:1101.00px;width:400px;text-align:right;top:302.93px;font-size:13.2px;line-height:20px;color:#000;font-weight:normal;transform:scaleX(0.9535);transform-origin:100% 0;">57701</div>
<div class="t" style="left:27.50px;top:321.93px;font-size:13.2px;line-height:20px;color:#000;font-weight:normal;font-style:normal;transform:scaleX(0.9221);transform-origin:0 0;">TKNJBYAB</div>
<div class="t" style="left:101.50px;top:321.93px;font-size:13.2px;line-height:20px;color:#000;font-weight:normal;font-style:normal;transform:scaleX(1.0620);transform-origin:0 0;">Property Manager1</div>
<div class="t" style="left:228.50px;top:321.93px;font-size:13.2px;line-height:20px;color:#000;font-weight:normal;font-style:normal;transform:scaleX(1.0648);transform-origin:0 0;">Fixed lighting fixture</div>
<div class="t" style="left:427.50px;top:321.93px;font-size:13.2px;line-height:20px;color:#000;font-weight:normal;font-style:normal;transform:scaleX(1.1090);transform-origin:0 0;">rewired</div>
<div class="t" style="left:397.00px;width:400px;text-align:right;top:321.93px;font-size:13.2px;line-height:20px;color:#000;font-weight:normal;transform:scaleX(0.9535);transform-origin:100% 0;">7</div>
<div class="t" style="left:495.00px;width:400px;text-align:right;top:321.93px;font-size:13.2px;line-height:20px;color:#000;font-weight:normal;transform:scaleX(1.0218);transform-origin:100% 0;">9/17/2021 7:59</div>
<div class="t" style="left:601.00px;width:400px;text-align:right;top:321.93px;font-size:13.2px;line-height:20px;color:#000;font-weight:normal;transform:scaleX(1.0165);transform-origin:100% 0;">9/17/2021 15:00</div>
<div class="t" style="left:1005.50px;top:321.93px;font-size:13.2px;line-height:20px;color:#000;font-weight:normal;font-style:normal;transform:scaleX(1.0250);transform-origin:0 0;">122 York Drive</div>
<div class="t" style="left:1121.50px;top:321.93px;font-size:13.2px;line-height:20px;color:#000;font-weight:normal;font-style:normal;transform:scaleX(1.0250);transform-origin:0 0;">122 York Drive</div>
<div class="t" style="left:1237.50px;top:321.93px;font-size:13.2px;line-height:20px;color:#000;font-weight:normal;font-style:normal;transform:scaleX(1.0964);transform-origin:0 0;">Yorktown</div>
<div class="t" style="left:1338.50px;top:321.93px;font-size:13.2px;line-height:20px;color:#000;font-weight:normal;font-style:normal;transform:scaleX(1.0824);transform-origin:0 0;">VA</div>
<div class="t" style="left:1101.00px;width:400px;text-align:right;top:321.93px;font-size:13.2px;line-height:20px;color:#000;font-weight:normal;transform:scaleX(0.9535);transform-origin:100% 0;">23690</div>
<div class="t" style="left:27.50px;top:340.93px;font-size:13.2px;line-height:20px;color:#000;font-weight:normal;font-style:normal;transform:scaleX(0.9221);transform-origin:0 0;">TKNJBYAB</div>
<div class="t" style="left:101.50px;top:340.93px;font-size:13.2px;line-height:20px;color:#000;font-weight:normal;font-style:normal;transform:scaleX(1.0620);transform-origin:0 0;">Property Manager1</div>
<div class="t" style="left:228.50px;top:340.93px;font-size:13.2px;line-height:20px;color:#000;font-weight:normal;font-style:normal;transform:scaleX(1.0628);transform-origin:0 0;">Changed light bulb</div>
<div class="t" style="left:427.50px;top:340.93px;font-size:13.2px;line-height:20px;color:#000;font-weight:normal;font-style:normal;transform:scaleX(1.0807);transform-origin:0 0;">2 100 watt light bulbs in living room lighting fixture</div>
<div class="t" style="left:397.00px;width:400px;text-align:right;top:340.93px;font-size:13.2px;line-height:20px;color:#000;font-weight:normal;transform:scaleX(0.9731);transform-origin:100% 0;">14.5</div>
<div class="t" style="left:495.00px;width:400px;text-align:right;top:340.93px;font-size:13.2px;line-height:20px;color:#000;font-weight:normal;transform:scaleX(1.0218);transform-origin:100% 0;">9/24/2021 7:59</div>
<div class="t" style="left:601.00px;width:400px;text-align:right;top:340.93px;font-size:13.2px;line-height:20px;color:#000;font-weight:normal;transform:scaleX(1.0165);transform-origin:100% 0;">9/24/2021 22:30</div>
<div class="t" style="left:1005.50px;top:340.93px;font-size:13.2px;line-height:20px;color:#000;font-weight:normal;font-style:normal;transform:scaleX(1.0250);transform-origin:0 0;">122 York Drive</div>
<div class="t" style="left:1121.50px;top:340.93px;font-size:13.2px;line-height:20px;color:#000;font-weight:normal;font-style:normal;transform:scaleX(1.0250);transform-origin:0 0;">122 York Drive</div>
<div class="t" style="left:1237.50px;top:340.93px;font-size:13.2px;line-height:20px;color:#000;font-weight:normal;font-style:normal;transform:scaleX(1.0964);transform-origin:0 0;">Yorktown</div>
<div class="t" style="left:1338.50px;top:340.93px;font-size:13.2px;line-height:20px;color:#000;font-weight:normal;font-style:normal;transform:scaleX(1.0824);transform-origin:0 0;">VA</div>
<div class="t" style="left:1101.00px;width:400px;text-align:right;top:340.93px;font-size:13.2px;line-height:20px;color:#000;font-weight:normal;transform:scaleX(0.9535);transform-origin:100% 0;">23690</div>
<div class="t" style="left:27.50px;top:359.93px;font-size:13.2px;line-height:20px;color:#000;font-weight:normal;font-style:normal;transform:scaleX(1.0146);transform-origin:0 0;">TN0MXVU</div>
<div class="t" style="left:101.50px;top:359.93px;font-size:13.2px;line-height:20px;color:#000;font-weight:normal;font-style:normal;transform:scaleX(1.0620);transform-origin:0 0;">Property Manager1</div>
<div class="t" style="left:228.50px;top:359.93px;font-size:13.2px;line-height:20px;color:#000;font-weight:normal;font-style:normal;transform:scaleX(1.0421);transform-origin:0 0;">Laeky faucet</div>
<div class="t" style="left:427.50px;top:359.93px;font-size:13.2px;line-height:20px;color:#000;font-weight:normal;font-style:normal;transform:scaleX(1.0516);transform-origin:0 0;">replaced gasket</div>
<div class="t" style="left:397.00px;width:400px;text-align:right;top:359.93px;font-size:13.2px;line-height:20px;color:#000;font-weight:normal;transform:scaleX(0.9535);transform-origin:100% 0;">13</div>
<div class="t" style="left:495.00px;width:400px;text-align:right;top:359.93px;font-size:13.2px;line-height:20px;color:#000;font-weight:normal;transform:scaleX(1.0218);transform-origin:100% 0;">9/24/2021 7:58</div>
<div class="t" style="left:601.00px;width:400px;text-align:right;top:359.93px;font-size:13.2px;line-height:20px;color:#000;font-weight:normal;transform:scaleX(1.0165);transform-origin:100% 0;">9/24/2021 21:00</div>
<div class="t" style="left:717.00px;width:400px;text-align:right;top:359.93px;font-size:13.2px;line-height:20px;color:#000;font-weight:normal;transform:scaleX(0.9535);transform-origin:100% 0;">3</div>
<div class="t" style="left:1121.50px;top:359.93px;font-size:13.2px;line-height:20px;color:#000;font-weight:normal;font-style:normal;transform:scaleX(1.0348);transform-origin:0 0;">101 Test Way</div>
<div class="t" style="left:1237.50px;top:359.93px;font-size:13.2px;line-height:20px;color:#000;font-weight:normal;font-style:normal;transform:scaleX(1.0018);transform-origin:0 0;">Rapid City</div>
<div class="t" style="left:1338.50px;top:359.93px;font-size:13.2px;line-height:20px;color:#000;font-weight:normal;font-style:normal;transform:scaleX(1.0377);transform-origin:0 0;">South Dakota</div>
<div class="t" style="left:1101.00px;width:400px;text-align:right;top:359.93px;font-size:13.2px;line-height:20px;color:#000;font-weight:normal;transform:scaleX(0.9535);transform-origin:100% 0;">57701</div>
<div class="t" style="left:27.50px;top:378.93px;font-size:13.2px;line-height:20px;color:#000;font-weight:normal;font-style:normal;transform:scaleX(0.8752);transform-origin:0 0;">TNXEBJE</div>
<div class="t" style="left:101.50px;top:378.93px;font-size:13.2px;line-height:20px;color:#000;font-weight:normal;font-style:normal;transform:scaleX(1.0642);transform-origin:0 0;">Maintenance User</div>
<div class="t" style="left:228.50px;top:378.93px;font-size:13.2px;line-height:20px;color:#000;font-weight:normal;font-style:normal;transform:scaleX(1.0421);transform-origin:0 0;">Laeky faucet</div>
<div class="t" style="left:427.50px;top:378.93px;font-size:13.2px;line-height:20px;color:#000;font-weight:normal;font-style:normal;transform:scaleX(1.0516);transform-origin:0 0;">replaced gasket</div>
<div class="t" style="left:397.00px;width:400px;text-align:right;top:378.93px;font-size:13.2px;line-height:20px;color:#000;font-weight:normal;transform:scaleX(0.9809);transform-origin:100% 0;">1.4</div>
<div class="t" style="left:495.00px;width:400px;text-align:right;top:378.93px;font-size:13.2px;line-height:20px;color:#000;font-weight:normal;transform:scaleX(1.0218);transform-origin:100% 0;">9/24/2021 8:04</div>
<div class="t" style="left:601.00px;width:400px;text-align:right;top:378.93px;font-size:13.2px;line-height:20px;color:#000;font-weight:normal;transform:scaleX(1.0218);transform-origin:100% 0;">9/24/2021 9:30</div>
<div class="t" style="left:717.00px;width:400px;text-align:right;top:378.93px;font-size:13.2px;line-height:20px;color:#000;font-weight:normal;transform:scaleX(0.9535);transform-origin:100% 0;">2</div>
<div class="t" style="left:1121.50px;top:378.93px;font-size:13.2px;line-height:20px;color:#000;font-weight:normal;font-style:normal;transform:scaleX(1.0348);transform-origin:0 0;">101 Test Way</div>
<div class="t" style="left:1237.50px;top:378.93px;font-size:13.2px;line-height:20px;color:#000;font-weight:normal;font-style:normal;transform:scaleX(1.0018);transform-origin:0 0;">Rapid City</div>
<div class="t" style="left:1338.50px;top:378.93px;font-size:13.2px;line-height:20px;color:#000;font-weight:normal;font-style:normal;transform:scaleX(1.0377);transform-origin:0 0;">South Dakota</div>
<div class="t" style="left:1101.00px;width:400px;text-align:right;top:378.93px;font-size:13.2px;line-height:20px;color:#000;font-weight:normal;transform:scaleX(0.9535);transform-origin:100% 0;">57701</div>
<div class="t" style="left:27.50px;top:397.93px;font-size:13.2px;line-height:20px;color:#000;font-weight:normal;font-style:normal;transform:scaleX(0.8752);transform-origin:0 0;">TNXEBJE</div>
<div class="t" style="left:101.50px;top:397.93px;font-size:13.2px;line-height:20px;color:#000;font-weight:normal;font-style:normal;transform:scaleX(1.0642);transform-origin:0 0;">Maintenance User</div>
<div class="t" style="left:228.50px;top:397.93px;font-size:13.2px;line-height:20px;color:#000;font-weight:normal;font-style:normal;transform:scaleX(1.0648);transform-origin:0 0;">Fixed lighting fixture</div>
<div class="t" style="left:427.50px;top:397.93px;font-size:13.2px;line-height:20px;color:#000;font-weight:normal;font-style:normal;transform:scaleX(1.1090);transform-origin:0 0;">rewired</div>
<div class="t" style="left:397.00px;width:400px;text-align:right;top:397.93px;font-size:13.2px;line-height:20px;color:#000;font-weight:normal;transform:scaleX(0.9809);transform-origin:100% 0;">3.4</div>
<div class="t" style="left:495.00px;width:400px;text-align:right;top:397.93px;font-size:13.2px;line-height:20px;color:#000;font-weight:normal;transform:scaleX(1.0218);transform-origin:100% 0;">9/15/2021 8:04</div>
<div class="t" style="left:601.00px;width:400px;text-align:right;top:397.93px;font-size:13.2px;line-height:20px;color:#000;font-weight:normal;transform:scaleX(1.0271);transform-origin:100% 0;">9/15/2021 11:30</div>
<div class="t" style="left:717.00px;width:400px;text-align:right;top:397.93px;font-size:13.2px;line-height:20px;color:#000;font-weight:normal;transform:scaleX(0.9535);transform-origin:100% 0;">2</div>
<div class="t" style="left:1121.50px;top:397.93px;font-size:13.2px;line-height:20px;color:#000;font-weight:normal;font-style:normal;transform:scaleX(1.0348);transform-origin:0 0;">101 Test Way</div>
<div class="t" style="left:1237.50px;top:397.93px;font-size:13.2px;line-height:20px;color:#000;font-weight:normal;font-style:normal;transform:scaleX(1.0018);transform-origin:0 0;">Rapid City</div>
<div class="t" style="left:1338.50px;top:397.93px;font-size:13.2px;line-height:20px;color:#000;font-weight:normal;font-style:normal;transform:scaleX(1.0377);transform-origin:0 0;">South Dakota</div>
<div class="t" style="left:1101.00px;width:400px;text-align:right;top:397.93px;font-size:13.2px;line-height:20px;color:#000;font-weight:normal;transform:scaleX(0.9535);transform-origin:100% 0;">57701</div>
<div class="t" style="left:27.50px;top:416.93px;font-size:13.2px;line-height:20px;color:#000;font-weight:normal;font-style:normal;transform:scaleX(0.9087);transform-origin:0 0;">TP9G7B</div>
<div class="t" style="left:101.50px;top:416.93px;font-size:13.2px;line-height:20px;color:#000;font-weight:normal;font-style:normal;transform:scaleX(1.0620);transform-origin:0 0;">Property Manager1</div>
<div class="t" style="left:228.50px;top:416.93px;font-size:13.2px;line-height:20px;color:#000;font-weight:normal;font-style:normal;transform:scaleX(1.0506);transform-origin:0 0;">Unclogged drain</div>
<div class="t" style="left:427.50px;top:416.93px;font-size:13.2px;line-height:20px;color:#000;font-weight:normal;font-style:normal;transform:scaleX(1.0529);transform-origin:0 0;">Bathroom sink - snaked</div>
<div class="t" style="left:397.00px;width:400px;text-align:right;top:416.93px;font-size:13.2px;line-height:20px;color:#000;font-weight:normal;transform:scaleX(0.9535);transform-origin:100% 0;">6</div>
<div class="t" style="left:495.00px;width:400px;text-align:right;top:416.93px;font-size:13.2px;line-height:20px;color:#000;font-weight:normal;transform:scaleX(1.0218);transform-origin:100% 0;">9/24/2021 8:02</div>
<div class="t" style="left:601.00px;width:400px;text-align:right;top:416.93px;font-size:13.2px;line-height:20px;color:#000;font-weight:normal;transform:scaleX(1.0165);transform-origin:100% 0;">9/24/2021 14:00</div>
<div class="t" style="left:717.00px;width:400px;text-align:right;top:416.93px;font-size:13.2px;line-height:20px;color:#000;font-weight:normal;transform:scaleX(0.9535);transform-origin:100% 0;">4</div>
<div class="t" style="left:1121.50px;top:416.93px;font-size:13.2px;line-height:20px;color:#000;font-weight:normal;font-style:normal;transform:scaleX(1.0348);transform-origin:0 0;">101 Test Way</div>
<div class="t" style="left:1237.50px;top:416.93px;font-size:13.2px;line-height:20px;color:#000;font-weight:normal;font-style:normal;transform:scaleX(1.0018);transform-origin:0 0;">Rapid City</div>
<div class="t" style="left:1338.50px;top:416.93px;font-size:13.2px;line-height:20px;color:#000;font-weight:normal;font-style:normal;transform:scaleX(1.0377);transform-origin:0 0;">South Dakota</div>
<div class="t" style="left:1101.00px;width:400px;text-align:right;top:416.93px;font-size:13.2px;line-height:20px;color:#000;font-weight:normal;transform:scaleX(0.9535);transform-origin:100% 0;">57701</div>
<div class="t" style="left:27.50px;top:435.93px;font-size:13.2px;line-height:20px;color:#000;font-weight:normal;font-style:normal;transform:scaleX(0.9227);transform-origin:0 0;">TQYBTYMB</div>
<div class="t" style="left:101.50px;top:435.93px;font-size:13.2px;line-height:20px;color:#000;font-weight:normal;font-style:normal;transform:scaleX(1.0620);transform-origin:0 0;">Property Manager1</div>
<div class="t" style="left:228.50px;top:435.93px;font-size:13.2px;line-height:20px;color:#000;font-weight:normal;font-style:normal;transform:scaleX(1.0578);transform-origin:0 0;">Replaced door nob</div>
<div class="t" style="left:427.50px;top:435.93px;font-size:13.2px;line-height:20px;color:#000;font-weight:normal;font-style:normal;transform:scaleX(1.0807);transform-origin:0 0;">New door nob in up stairs bathroom</div>
<div class="t" style="left:397.00px;width:400px;text-align:right;top:435.93px;font-size:13.2px;line-height:20px;color:#000;font-weight:normal;transform:scaleX(0.9809);transform-origin:100% 0;">4.1</div>
<div class="t" style="left:495.00px;width:400px;text-align:right;top:435.93px;font-size:13.2px;line-height:20px;color:#000;font-weight:normal;transform:scaleX(1.0280);transform-origin:100% 0;">9/1/2021 7:56</div>
<div class="t" style="left:601.00px;width:400px;text-align:right;top:435.93px;font-size:13.2px;line-height:20px;color:#000;font-weight:normal;transform:scaleX(1.0218);transform-origin:100% 0;">9/1/2021 12:00</div>
<div class="t" style="left:1005.50px;top:435.93px;font-size:13.2px;line-height:20px;color:#000;font-weight:normal;font-style:normal;transform:scaleX(1.0250);transform-origin:0 0;">122 York Drive</div>
<div class="t" style="left:1121.50px;top:435.93px;font-size:13.2px;line-height:20px;color:#000;font-weight:normal;font-style:normal;transform:scaleX(1.0250);transform-origin:0 0;">122 York Drive</div>
<div class="t" style="left:1237.50px;top:435.93px;font-size:13.2px;line-height:20px;color:#000;font-weight:normal;font-style:normal;transform:scaleX(1.0964);transform-origin:0 0;">Yorktown</div>
<div class="t" style="left:1338.50px;top:435.93px;font-size:13.2px;line-height:20px;color:#000;font-weight:normal;font-style:normal;transform:scaleX(1.0824);transform-origin:0 0;">VA</div>
<div class="t" style="left:1101.00px;width:400px;text-align:right;top:435.93px;font-size:13.2px;line-height:20px;color:#000;font-weight:normal;transform:scaleX(0.9535);transform-origin:100% 0;">23690</div>
<div class="t" style="left:27.50px;top:454.93px;font-size:13.2px;line-height:20px;color:#000;font-weight:normal;font-style:normal;transform:scaleX(0.9227);transform-origin:0 0;">TQYBTYMB</div>
<div class="t" style="left:101.50px;top:454.93px;font-size:13.2px;line-height:20px;color:#000;font-weight:normal;font-style:normal;transform:scaleX(1.0620);transform-origin:0 0;">Property Manager1</div>
<div class="t" style="left:228.50px;top:454.93px;font-size:13.2px;line-height:20px;color:#000;font-weight:normal;font-style:normal;transform:scaleX(1.0506);transform-origin:0 0;">Unclogged drain</div>
<div class="t" style="left:427.50px;top:454.93px;font-size:13.2px;line-height:20px;color:#000;font-weight:normal;font-style:normal;transform:scaleX(1.0529);transform-origin:0 0;">Bathroom sink - snaked</div>
<div class="t" style="left:397.00px;width:400px;text-align:right;top:454.93px;font-size:13.2px;line-height:20px;color:#000;font-weight:normal;transform:scaleX(0.9535);transform-origin:100% 0;">6</div>
<div class="t" style="left:495.00px;width:400px;text-align:right;top:454.93px;font-size:13.2px;line-height:20px;color:#000;font-weight:normal;transform:scaleX(1.0218);transform-origin:100% 0;">9/17/2021 7:57</div>
<div class="t" style="left:601.00px;width:400px;text-align:right;top:454.93px;font-size:13.2px;line-height:20px;color:#000;font-weight:normal;transform:scaleX(1.0165);transform-origin:100% 0;">9/17/2021 14:00</div>
<div class="t" style="left:1005.50px;top:454.93px;font-size:13.2px;line-height:20px;color:#000;font-weight:normal;font-style:normal;transform:scaleX(1.0250);transform-origin:0 0;">122 York Drive</div>
<div class="t" style="left:1121.50px;top:454.93px;font-size:13.2px;line-height:20px;color:#000;font-weight:normal;font-style:normal;transform:scaleX(1.0250);transform-origin:0 0;">122 York Drive</div>
<div class="t" style="left:1237.50px;top:454.93px;font-size:13.2px;line-height:20px;color:#000;font-weight:normal;font-style:normal;transform:scaleX(1.0964);transform-origin:0 0;">Yorktown</div>
<div class="t" style="left:1338.50px;top:454.93px;font-size:13.2px;line-height:20px;color:#000;font-weight:normal;font-style:normal;transform:scaleX(1.0824);transform-origin:0 0;">VA</div>
<div class="t" style="left:1101.00px;width:400px;text-align:right;top:454.93px;font-size:13.2px;line-height:20px;color:#000;font-weight:normal;transform:scaleX(0.9535);transform-origin:100% 0;">23690</div>
<div class="t" style="left:27.50px;top:473.93px;font-size:13.2px;line-height:20px;color:#000;font-weight:normal;font-style:normal;transform:scaleX(0.9347);transform-origin:0 0;">TT1GUWC</div>
<div class="t" style="left:101.50px;top:473.93px;font-size:13.2px;line-height:20px;color:#000;font-weight:normal;font-style:normal;transform:scaleX(1.0620);transform-origin:0 0;">Property Manager1</div>
<div class="t" style="left:228.50px;top:473.93px;font-size:13.2px;line-height:20px;color:#000;font-weight:normal;font-style:normal;transform:scaleX(1.0632);transform-origin:0 0;">Dishwasher latch replacement</div>
<div class="t" style="left:427.50px;top:473.93px;font-size:13.2px;line-height:20px;color:#000;font-weight:normal;font-style:normal;transform:scaleX(1.0607);transform-origin:0 0;">Frigidaire door latch- replaced</div>
<div class="t" style="left:397.00px;width:400px;text-align:right;top:473.93px;font-size:13.2px;line-height:20px;color:#000;font-weight:normal;transform:scaleX(0.9535);transform-origin:100% 0;">2</div>
<div class="t" style="left:495.00px;width:400px;text-align:right;top:473.93px;font-size:13.2px;line-height:20px;color:#000;font-weight:normal;transform:scaleX(1.0218);transform-origin:100% 0;">9/20/2021 8:00</div>
<div class="t" style="left:601.00px;width:400px;text-align:right;top:473.93px;font-size:13.2px;line-height:20px;color:#000;font-weight:normal;transform:scaleX(1.0165);transform-origin:100% 0;">9/20/2021 10:00</div>
<div class="t" style="left:1005.50px;top:473.93px;font-size:13.2px;line-height:20px;color:#000;font-weight:normal;font-style:normal;transform:scaleX(1.0339);transform-origin:0 0;">10 Berkeley Place</div>
<div class="t" style="left:1121.50px;top:473.93px;font-size:13.2px;line-height:20px;color:#000;font-weight:normal;font-style:normal;transform:scaleX(1.0339);transform-origin:0 0;">10 Berkeley Place</div>
<div class="t" style="left:1237.50px;top:473.93px;font-size:13.2px;line-height:20px;color:#000;font-weight:normal;font-style:normal;transform:scaleX(1.0952);transform-origin:0 0;">Newport News</div>
<div class="t" style="left:1338.50px;top:473.93px;font-size:13.2px;line-height:20px;color:#000;font-weight:normal;font-style:normal;transform:scaleX(1.0824);transform-origin:0 0;">VA</div>
<div class="t" style="left:1101.00px;width:400px;text-align:right;top:473.93px;font-size:13.2px;line-height:20px;color:#000;font-weight:normal;transform:scaleX(0.9535);transform-origin:100% 0;">23608</div>
<div class="t" style="left:27.50px;top:492.93px;font-size:13.2px;line-height:20px;color:#000;font-weight:normal;font-style:normal;transform:scaleX(0.8973);transform-origin:0 0;">TV4EC7T</div>
<div class="t" style="left:101.50px;top:492.93px;font-size:13.2px;line-height:20px;color:#000;font-weight:normal;font-style:normal;transform:scaleX(1.0642);transform-origin:0 0;">Maintenance User</div>
<div class="t" style="left:228.50px;top:492.93px;font-size:13.2px;line-height:20px;color:#000;font-weight:normal;font-style:normal;transform:scaleX(1.0632);transform-origin:0 0;">Dishwasher latch replacement</div>
<div class="t" style="left:427.50px;top:492.93px;font-size:13.2px;line-height:20px;color:#000;font-weight:normal;font-style:normal;transform:scaleX(1.0607);transform-origin:0 0;">Frigidaire door latch- replaced</div>
<div class="t" style="left:397.00px;width:400px;text-align:right;top:492.93px;font-size:13.2px;line-height:20px;color:#000;font-weight:normal;transform:scaleX(0.9809);transform-origin:100% 0;">5.9</div>
<div class="t" style="left:495.00px;width:400px;text-align:right;top:492.93px;font-size:13.2px;line-height:20px;color:#000;font-weight:normal;transform:scaleX(1.0218);transform-origin:100% 0;">9/17/2021 8:06</div>
<div class="t" style="left:601.00px;width:400px;text-align:right;top:492.93px;font-size:13.2px;line-height:20px;color:#000;font-weight:normal;transform:scaleX(1.0165);transform-origin:100% 0;">9/17/2021 14:00</div>
<div class="t" style="left:717.00px;width:400px;text-align:right;top:492.93px;font-size:13.2px;line-height:20px;color:#000;font-weight:normal;transform:scaleX(0.9535);transform-origin:100% 0;">2</div>
<div class="t" style="left:1121.50px;top:492.93px;font-size:13.2px;line-height:20px;color:#000;font-weight:normal;font-style:normal;transform:scaleX(1.0348);transform-origin:0 0;">101 Test Way</div>
<div class="t" style="left:1237.50px;top:492.93px;font-size:13.2px;line-height:20px;color:#000;font-weight:normal;font-style:normal;transform:scaleX(1.0018);transform-origin:0 0;">Rapid City</div>
<div class="t" style="left:1338.50px;top:492.93px;font-size:13.2px;line-height:20px;color:#000;font-weight:normal;font-style:normal;transform:scaleX(1.0377);transform-origin:0 0;">South Dakota</div>
<div class="t" style="left:1101.00px;width:400px;text-align:right;top:492.93px;font-size:13.2px;line-height:20px;color:#000;font-weight:normal;transform:scaleX(0.9535);transform-origin:100% 0;">57701</div>
<div class="t" style="left:27.50px;top:511.93px;font-size:13.2px;line-height:20px;color:#000;font-weight:normal;font-style:normal;transform:scaleX(0.9875);transform-origin:0 0;">TWNJ0MP</div>
<div class="t" style="left:101.50px;top:511.93px;font-size:13.2px;line-height:20px;color:#000;font-weight:normal;font-style:normal;transform:scaleX(1.0642);transform-origin:0 0;">Maintenance User</div>
<div class="t" style="left:228.50px;top:511.93px;font-size:13.2px;line-height:20px;color:#000;font-weight:normal;font-style:normal;transform:scaleX(1.0628);transform-origin:0 0;">Changed light bulb</div>
<div class="t" style="left:427.50px;top:511.93px;font-size:13.2px;line-height:20px;color:#000;font-weight:normal;font-style:normal;transform:scaleX(1.0807);transform-origin:0 0;">2 100 watt light bulbs in living room lighting fixture</div>
<div class="t" style="left:397.00px;width:400px;text-align:right;top:511.93px;font-size:13.2px;line-height:20px;color:#000;font-weight:normal;transform:scaleX(0.9535);transform-origin:100% 0;">9</div>
<div class="t" style="left:495.00px;width:400px;text-align:right;top:511.93px;font-size:13.2px;line-height:20px;color:#000;font-weight:normal;transform:scaleX(1.0218);transform-origin:100% 0;">5/4/2021 14:23</div>
<div class="t" style="left:601.00px;width:400px;text-align:right;top:511.93px;font-size:13.2px;line-height:20px;color:#000;font-weight:normal;transform:scaleX(1.0218);transform-origin:100% 0;">5/4/2021 23:23</div>
<div class="t" style="left:717.00px;width:400px;text-align:right;top:511.93px;font-size:13.2px;line-height:20px;color:#000;font-weight:normal;transform:scaleX(0.9535);transform-origin:100% 0;">1</div>
<div class="t" style="left:1121.50px;top:511.93px;font-size:13.2px;line-height:20px;color:#000;font-weight:normal;font-style:normal;transform:scaleX(1.0348);transform-origin:0 0;">101 Test Way</div>
<div class="t" style="left:1237.50px;top:511.93px;font-size:13.2px;line-height:20px;color:#000;font-weight:normal;font-style:normal;transform:scaleX(1.0018);transform-origin:0 0;">Rapid City</div>
<div class="t" style="left:1338.50px;top:511.93px;font-size:13.2px;line-height:20px;color:#000;font-weight:normal;font-style:normal;transform:scaleX(1.0377);transform-origin:0 0;">South Dakota</div>
<div class="t" style="left:1101.00px;width:400px;text-align:right;top:511.93px;font-size:13.2px;line-height:20px;color:#000;font-weight:normal;transform:scaleX(0.9535);transform-origin:100% 0;">57701</div>
<div class="t" style="left:27.50px;top:530.93px;font-size:13.2px;line-height:20px;color:#000;font-weight:normal;font-style:normal;transform:scaleX(0.9875);transform-origin:0 0;">TWNJ0MP</div>
<div class="t" style="left:101.50px;top:530.93px;font-size:13.2px;line-height:20px;color:#000;font-weight:normal;font-style:normal;transform:scaleX(1.0642);transform-origin:0 0;">Maintenance User</div>
<div class="t" style="left:228.50px;top:530.93px;font-size:13.2px;line-height:20px;color:#000;font-weight:normal;font-style:normal;transform:scaleX(1.0709);transform-origin:0 0;">Replaced air filter</div>
<div class="t" style="left:427.50px;top:530.93px;font-size:13.2px;line-height:20px;color:#000;font-weight:normal;font-style:normal;transform:scaleX(1.0930);transform-origin:0 0;">Honeywell filter for upper level HVAC system</div>
<div class="t" style="left:397.00px;width:400px;text-align:right;top:530.93px;font-size:13.2px;line-height:20px;color:#000;font-weight:normal;transform:scaleX(0.9535);transform-origin:100% 0;">1</div>
<div class="t" style="left:495.00px;width:400px;text-align:right;top:530.93px;font-size:13.2px;line-height:20px;color:#000;font-weight:normal;transform:scaleX(1.0218);transform-origin:100% 0;">5/4/2021 14:24</div>
<div class="t" style="left:601.00px;width:400px;text-align:right;top:530.93px;font-size:13.2px;line-height:20px;color:#000;font-weight:normal;transform:scaleX(1.0218);transform-origin:100% 0;">5/4/2021 15:24</div>
<div class="t" style="left:717.00px;width:400px;text-align:right;top:530.93px;font-size:13.2px;line-height:20px;color:#000;font-weight:normal;transform:scaleX(0.9535);transform-origin:100% 0;">1</div>
<div class="t" style="left:1121.50px;top:530.93px;font-size:13.2px;line-height:20px;color:#000;font-weight:normal;font-style:normal;transform:scaleX(1.0348);transform-origin:0 0;">101 Test Way</div>
<div class="t" style="left:1237.50px;top:530.93px;font-size:13.2px;line-height:20px;color:#000;font-weight:normal;font-style:normal;transform:scaleX(1.0018);transform-origin:0 0;">Rapid City</div>
<div class="t" style="left:1338.50px;top:530.93px;font-size:13.2px;line-height:20px;color:#000;font-weight:normal;font-style:normal;transform:scaleX(1.0377);transform-origin:0 0;">South Dakota</div>
<div class="t" style="left:1101.00px;width:400px;text-align:right;top:530.93px;font-size:13.2px;line-height:20px;color:#000;font-weight:normal;transform:scaleX(0.9535);transform-origin:100% 0;">57701</div>
<div class="b" style="left:0px;top:207px;width:1898px;height:19px;background:#e6e6e6"></div>
<div class="b" style="left:757px;top:207px;width:42px;height:19px;background:#d2d2d2"></div>
<svg class="b" style="left:0;top:0" width="1918" height="240"><rect x="25" y="208" width="1" height="18" fill="#c0c0c0"/><rect x="99" y="208" width="1" height="18" fill="#c0c0c0"/><rect x="226" y="208" width="1" height="18" fill="#c0c0c0"/><rect x="425" y="208" width="1" height="18" fill="#c0c0c0"/><rect x="756" y="208" width="1" height="18" fill="#c0c0c0"/><rect x="799" y="208" width="1" height="18" fill="#c0c0c0"/><rect x="897" y="208" width="1" height="18" fill="#c0c0c0"/><rect x="1003" y="208" width="1" height="18" fill="#c0c0c0"/><rect x="1119" y="208" width="1" height="18" fill="#c0c0c0"/><rect x="1235" y="208" width="1" height="18" fill="#c0c0c0"/><rect x="1336" y="208" width="1" height="18" fill="#c0c0c0"/><rect x="1425" y="208" width="1" height="18" fill="#c0c0c0"/><rect x="1503" y="208" width="1" height="18" fill="#c0c0c0"/><rect x="1567" y="208" width="1" height="18" fill="#c0c0c0"/><rect x="1631" y="208" width="1" height="18" fill="#c0c0c0"/><rect x="1695" y="208" width="1" height="18" fill="#c0c0c0"/><rect x="1759" y="208" width="1" height="18" fill="#c0c0c0"/><rect x="1823" y="208" width="1" height="18" fill="#c0c0c0"/><rect x="1887" y="208" width="1" height="18" fill="#c0c0c0"/><rect x="0" y="226" width="1898" height="1" fill="#9f9f9f"/><rect x="756" y="225" width="44" height="2" fill="#217346"/></svg>
<svg class="b" style="left:0px;top:207px;" width="26" height="19" viewBox="0 0 26 19"><polygon points="22,4 22,16 10,16" fill="#b8b8b8"/></svg>
<div class="t" style="left:-137.50px;width:400px;text-align:center;top:206.93px;font-size:13.2px;line-height:20px;color:#222;font-weight:normal;transform:scaleX(0.9645);transform-origin:50% 0;">A</div>
<div class="t" style="left:-37.00px;width:400px;text-align:center;top:206.93px;font-size:13.2px;line-height:20px;color:#222;font-weight:normal;transform:scaleX(0.9062);transform-origin:50% 0;">B</div>
<div class="t" style="left:126.00px;width:400px;text-align:center;top:206.93px;font-size:13.2px;line-height:20px;color:#222;font-weight:normal;transform:scaleX(0.8201);transform-origin:50% 0;">C</div>
<div class="t" style="left:391.00px;width:400px;text-align:center;top:206.93px;font-size:13.2px;line-height:20px;color:#222;font-weight:normal;transform:scaleX(0.9462);transform-origin:50% 0;">D</div>
<div class="t" style="left:578.00px;width:400px;text-align:center;top:206.93px;font-size:13.2px;line-height:20px;color:#217346;font-weight:normal;transform:scaleX(0.8129);transform-origin:50% 0;">E</div>
<div class="t" style="left:648.50px;width:400px;text-align:center;top:206.93px;font-size:13.2px;line-height:20px;color:#222;font-weight:normal;transform:scaleX(0.8349);transform-origin:50% 0;">F</div>
<div class="t" style="left:750.50px;width:400px;text-align:center;top:206.93px;font-size:13.2px;line-height:20px;color:#222;font-weight:normal;transform:scaleX(0.9014);transform-origin:50% 0;">G</div>
<div class="t" style="left:861.50px;width:400px;text-align:center;top:206.93px;font-size:13.2px;line-height:20px;color:#222;font-weight:normal;transform:scaleX(0.9585);transform-origin:50% 0;">H</div>
<div class="t" style="left:977.50px;width:400px;text-align:center;top:206.93px;font-size:13.2px;line-height:20px;color:#222;font-weight:normal;transform:scaleX(1.0079);transform-origin:50% 0;">I</div>
<div class="t" style="left:1086.00px;width:400px;text-align:center;top:206.93px;font-size:13.2px;line-height:20px;color:#222;font-weight:normal;transform:scaleX(0.7089);transform-origin:50% 0;">J</div>
<div class="t" style="left:1181.00px;width:400px;text-align:center;top:206.93px;font-size:13.2px;line-height:20px;color:#222;font-weight:normal;transform:scaleX(0.8662);transform-origin:50% 0;">K</div>
<div class="t" style="left:1264.50px;width:400px;text-align:center;top:206.93px;font-size:13.2px;line-height:20px;color:#222;font-weight:normal;transform:scaleX(0.8391);transform-origin:50% 0;">L</div>
<div class="t" style="left:1335.50px;width:400px;text-align:center;top:206.93px;font-size:13.2px;line-height:20px;color:#222;font-weight:normal;transform:scaleX(1.1404);transform-origin:50% 0;">M</div>
<div class="t" style="left:1399.50px;width:400px;text-align:center;top:206.93px;font-size:13.2px;line-height:20px;color:#222;font-weight:normal;transform:scaleX(0.9939);transform-origin:50% 0;">N</div>
<div class="t" style="left:1463.50px;width:400px;text-align:center;top:206.93px;font-size:13.2px;line-height:20px;color:#222;font-weight:normal;transform:scaleX(0.9457);transform-origin:50% 0;">O</div>
<div class="t" style="left:1527.50px;width:400px;text-align:center;top:206.93px;font-size:13.2px;line-height:20px;color:#222;font-weight:normal;transform:scaleX(0.8612);transform-origin:50% 0;">P</div>
<div class="t" style="left:1591.50px;width:400px;text-align:center;top:206.93px;font-size:13.2px;line-height:20px;color:#222;font-weight:normal;transform:scaleX(0.9614);transform-origin:50% 0;">Q</div>
<div class="t" style="left:1655.50px;width:400px;text-align:center;top:206.93px;font-size:13.2px;line-height:20px;color:#222;font-weight:normal;transform:scaleX(0.8354);transform-origin:50% 0;">R</div>
<div class="b" style="left:0px;top:227px;width:25px;height:763px;background:#e6e6e6"></div>
<div class="b" style="left:0px;top:322px;width:24px;height:37px;background:#d2d2d2"></div>
<svg class="b" style="left:0;top:0" width="40" height="1000"><rect x="0" y="245" width="25" height="1" fill="#bdbdbd"/><rect x="0" y="264" width="25" height="1" fill="#bdbdbd"/><rect x="0" y="283" width="25" height="1" fill="#bdbdbd"/><rect x="0" y="302" width="25" height="1" fill="#bdbdbd"/><rect x="0" y="321" width="25" height="1" fill="#bdbdbd"/><rect x="0" y="340" width="25" height="1" fill="#bdbdbd"/><rect x="0" y="359" width="25" height="1" fill="#bdbdbd"/><rect x="0" y="378" width="25" height="1" fill="#bdbdbd"/><rect x="0" y="397" width="25" height="1" fill="#bdbdbd"/><rect x="0" y="416" width="25" height="1" fill="#bdbdbd"/><rect x="0" y="435" width="25" height="1" fill="#bdbdbd"/><rect x="0" y="454" width="25" height="1" fill="#bdbdbd"/><rect x="0" y="473" width="25" height="1" fill="#bdbdbd"/><rect x="0" y="492" width="25" height="1" fill="#bdbdbd"/><rect x="0" y="511" width="25" height="1" fill="#bdbdbd"/><rect x="0" y="530" width="25" height="1" fill="#bdbdbd"/><rect x="0" y="549" width="25" height="1" fill="#bdbdbd"/><rect x="0" y="568" width="25" height="1" fill="#bdbdbd"/><rect x="0" y="587" width="25" height="1" fill="#bdbdbd"/><rect x="0" y="606" width="25" height="1" fill="#bdbdbd"/><rect x="0" y="625" width="25" height="1" fill="#bdbdbd"/><rect x="0" y="644" width="25" height="1" fill="#bdbdbd"/><rect x="0" y="663" width="25" height="1" fill="#bdbdbd"/><rect x="0" y="682" width="25" height="1" fill="#bdbdbd"/><rect x="0" y="701" width="25" height="1" fill="#bdbdbd"/><rect x="0" y="720" width="25" height="1" fill="#bdbdbd"/><rect x="0" y="739" width="25" height="1" fill="#bdbdbd"/><rect x="0" y="758" width="25" height="1" fill="#bdbdbd"/><rect x="0" y="777" width="25" height="1" fill="#bdbdbd"/><rect x="0" y="796" width="25" height="1" fill="#bdbdbd"/><rect x="0" y="815" width="25" height="1" fill="#bdbdbd"/><rect x="0" y="834" width="25" height="1" fill="#bdbdbd"/><rect x="0" y="853" width="25" height="1" fill="#bdbdbd"/><rect x="0" y="872" width="25" height="1" fill="#bdbdbd"/><rect x="0" y="891" width="25" height="1" fill="#bdbdbd"/><rect x="0" y="910" width="25" height="1" fill="#bdbdbd"/><rect x="0" y="929" width="25" height="1" fill="#bdbdbd"/><rect x="0" y="948" width="25" height="1" fill="#bdbdbd"/><rect x="0" y="967" width="25" height="1" fill="#bdbdbd"/><rect x="0" y="986" width="25" height="1" fill="#bdbdbd"/><rect x="25" y="207" width="1" height="783" fill="#9f9f9f"/><rect x="24" y="321" width="2" height="38" fill="#217346"/></svg>
<div class="t" style="left:-187.00px;width:400px;text-align:center;top:226.93px;font-size:13.2px;line-height:20px;color:#222;font-weight:normal;transform:scaleX(1.0129);transform-origin:50% 0;">1</div>
<div class="t" style="left:-187.00px;width:400px;text-align:center;top:245.93px;font-size:13.2px;line-height:20px;color:#222;font-weight:normal;transform:scaleX(1.0129);transform-origin:50% 0;">2</div>
<div class="t" style="left:-187.00px;width:400px;text-align:center;top:264.93px;font-size:13.2px;line-height:20px;color:#222;font-weight:normal;transform:scaleX(1.0129);transform-origin:50% 0;">3</div>
<div class="t" style="left:-187.00px;width:400px;text-align:center;top:283.93px;font-size:13.2px;line-height:20px;color:#222;font-weight:normal;transform:scaleX(1.0129);transform-origin:50% 0;">4</div>
<div class="t" style="left:-187.00px;width:400px;text-align:center;top:302.93px;font-size:13.2px;line-height:20px;color:#222;font-weight:normal;transform:scaleX(1.0129);transform-origin:50% 0;">5</div>
<div class="t" style="left:-187.00px;width:400px;text-align:center;top:321.93px;font-size:13.2px;line-height:20px;color:#217346;font-weight:normal;transform:scaleX(1.0129);transform-origin:50% 0;">6</div>
<div class="t" style="left:-187.00px;width:400px;text-align:center;top:340.93px;font-size:13.2px;line-height:20px;color:#217346;font-weight:normal;transform:scaleX(1.0129);transform-origin:50% 0;">7</div>
<div class="t" style="left:-187.00px;width:400px;text-align:center;top:359.93px;font-size:13.2px;line-height:20px;color:#222;font-weight:normal;transform:scaleX(1.0129);transform-origin:50% 0;">8</div>
<div class="t" style="left:-187.00px;width:400px;text-align:center;top:378.93px;font-size:13.2px;line-height:20px;color:#222;font-weight:normal;transform:scaleX(1.0129);transform-origin:50% 0;">9</div>
<div class="t" style="left:-187.00px;width:400px;text-align:center;top:397.93px;font-size:13.2px;line-height:20px;color:#222;font-weight:normal;transform:scaleX(1.0129);transform-origin:50% 0;">10</div>
<div class="t" style="left:-187.00px;width:400px;text-align:center;top:416.93px;font-size:13.2px;line-height:20px;color:#222;font-weight:normal;transform:scaleX(1.0853);transform-origin:50% 0;">11</div>
<div class="t" style="left:-187.00px;width:400px;text-align:center;top:435.93px;font-size:13.2px;line-height:20px;color:#222;font-weight:normal;transform:scaleX(1.0129);transform-origin:50% 0;">12</div>
<div class="t" style="left:-187.00px;width:400px;text-align:center;top:454.93px;font-size:13.2px;line-height:20px;color:#222;font-weight:normal;transform:scaleX(1.0129);transform-origin:50% 0;">13</div>
<div class="t" style="left:-187.00px;width:400px;text-align:center;top:473.93px;font-size:13.2px;line-height:20px;color:#222;font-weight:normal;transform:scaleX(1.0129);transform-origin:50% 0;">14</div>
<div class="t" style="left:-187.00px;width:400px;text-align:center;top:492.93px;font-size:13.2px;line-height:20px;color:#222;font-weight:normal;transform:scaleX(1.0129);transform-origin:50% 0;">15</div>
<div class="t" style="left:-187.00px;width:400px;text-align:center;top:511.93px;font-size:13.2px;line-height:20px;color:#222;font-weight:normal;transform:scaleX(1.0129);transform-origin:50% 0;">16</div>
<div class="t" style="left:-187.00px;width:400px;text-align:center;top:530.93px;font-size:13.2px;line-height:20px;color:#222;font-weight:normal;transform:scaleX(1.0129);transform-origin:50% 0;">17</div>
<div class="t" style="left:-187.00px;width:400px;text-align:center;top:549.93px;font-size:13.2px;line-height:20px;color:#222;font-weight:normal;transform:scaleX(1.0129);transform-origin:50% 0;">18</div>
<div class="t" style="left:-187.00px;width:400px;text-align:center;top:568.93px;font-size:13.2px;line-height:20px;color:#222;font-weight:normal;transform:scaleX(1.0129);transform-origin:50% 0;">19</div>
<div class="t" style="left:-187.00px;width:400px;text-align:center;top:587.93px;font-size:13.2px;line-height:20px;color:#222;font-weight:normal;transform:scaleX(1.0129);transform-origin:50% 0;">20</div>
<div class="t" style="left:-187.00px;width:400px;text-align:center;top:606.93px;font-size:13.2px;line-height:20px;color:#222;font-weight:normal;transform:scaleX(1.0129);transform-origin:50% 0;">21</div>
<div class="t" style="left:-187.00px;width:400px;text-align:center;top:625.93px;font-size:13.2px;line-height:20px;color:#222;font-weight:normal;transform:scaleX(1.0129);transform-origin:50% 0;">22</div>
<div class="t" style="left:-187.00px;width:400px;text-align:center;top:644.93px;font-size:13.2px;line-height:20px;color:#222;font-weight:normal;transform:scaleX(1.0129);transform-origin:50% 0;">23</div>
<div class="t" style="left:-187.00px;width:400px;text-align:center;top:663.93px;font-size:13.2px;line-height:20px;color:#222;font-weight:normal;transform:scaleX(1.0129);transform-origin:50% 0;">24</div>
<div class="t" style="left:-187.00px;width:400px;text-align:center;top:682.93px;font-size:13.2px;line-height:20px;color:#222;font-weight:normal;transform:scaleX(1.0129);transform-origin:50% 0;">25</div>
<div class="t" style="left:-187.00px;width:400px;text-align:center;top:701.93px;font-size:13.2px;line-height:20px;color:#222;font-weight:normal;transform:scaleX(1.0129);transform-origin:50% 0;">26</div>
<div class="t" style="left:-187.00px;width:400px;text-align:center;top:720.93px;font-size:13.2px;line-height:20px;color:#222;font-weight:normal;transform:scaleX(1.0129);transform-origin:50% 0;">27</div>
<div class="t" style="left:-187.00px;width:400px;text-align:center;top:739.93px;font-size:13.2px;line-height:20px;color:#222;font-weight:normal;transform:scaleX(1.0129);transform-origin:50% 0;">28</div>
<div class="t" style="left:-187.00px;width:400px;text-align:center;top:758.93px;font-size:13.2px;line-height:20px;color:#222;font-weight:normal;transform:scaleX(1.0129);transform-origin:50% 0;">29</div>
<div class="t" style="left:-187.00px;width:400px;text-align:center;top:777.93px;font-size:13.2px;line-height:20px;color:#222;font-weight:normal;transform:scaleX(1.0129);transform-origin:50% 0;">30</div>
<div class="t" style="left:-187.00px;width:400px;text-align:center;top:796.93px;font-size:13.2px;line-height:20px;color:#222;font-weight:normal;transform:scaleX(1.0129);transform-origin:50% 0;">31</div>
<div class="t" style="left:-187.00px;width:400px;text-align:center;top:815.93px;font-size:13.2px;line-height:20px;color:#222;font-weight:normal;transform:scaleX(1.0129);transform-origin:50% 0;">32</div>
<div class="t" style="left:-187.00px;width:400px;text-align:center;top:834.93px;font-size:13.2px;line-height:20px;color:#222;font-weight:normal;transform:scaleX(1.0129);transform-origin:50% 0;">33</div>
<div class="t" style="left:-187.00px;width:400px;text-align:center;top:853.93px;font-size:13.2px;line-height:20px;color:#222;font-weight:normal;transform:scaleX(1.0129);transform-origin:50% 0;">34</div>
<div class="t" style="left:-187.00px;width:400px;text-align:center;top:872.93px;font-size:13.2px;line-height:20px;color:#222;font-weight:normal;transform:scaleX(1.0129);transform-origin:50% 0;">35</div>
<div class="t" style="left:-187.00px;width:400px;text-align:center;top:891.93px;font-size:13.2px;line-height:20px;color:#222;font-weight:normal;transform:scaleX(1.0129);transform-origin:50% 0;">36</div>
<div class="t" style="left:-187.00px;width:400px;text-align:center;top:910.93px;font-size:13.2px;line-height:20px;color:#222;font-weight:normal;transform:scaleX(1.0129);transform-origin:50% 0;">37</div>
<div class="t" style="left:-187.00px;width:400px;text-align:center;top:929.93px;font-size:13.2px;line-height:20px;color:#222;font-weight:normal;transform:scaleX(1.0129);transform-origin:50% 0;">38</div>
<div class="t" style="left:-187.00px;width:400px;text-align:center;top:948.93px;font-size:13.2px;line-height:20px;color:#222;font-weight:normal;transform:scaleX(1.0129);transform-origin:50% 0;">39</div>
<div class="t" style="left:-187.00px;width:400px;text-align:center;top:967.93px;font-size:13.2px;line-height:20px;color:#222;font-weight:normal;transform:scaleX(1.0129);transform-origin:50% 0;">40</div>
<div class="b" style="left:1898px;top:226px;width:1px;height:765px;background:#a6a6a6"></div>
<div class="b" style="left:755px;top:320px;width:46px;height:2px;background:#217346"></div>
<div class="b" style="left:755px;top:320px;width:2px;height:41px;background:#217346"></div>
<div class="b" style="left:799px;top:320px;width:2px;height:37px;background:#217346"></div>
<div class="b" style="left:755px;top:359px;width:41px;height:2px;background:#217346"></div>
<div class="b" style="left:796px;top:356px;width:7px;height:7px;background:#fff"></div>
<div class="b" style="left:797px;top:357px;width:5px;height:5px;background:#217346"></div>
<div class="b" style="left:748px;top:313px;width:63px;height:50px;border:3px solid #c80000;box-shadow:2px 2px 4px rgba(0,0,0,0.35), inset 2px 2px 4px rgba(0,0,0,0.3)"></div>
<div class="b" style="left:5px;top:171px;width:100px;height:24px;background:#fff;border:1px solid #c6c6c6"></div>
<div class="t" style="left:12.00px;top:174.50px;font-size:13px;line-height:20px;color:#222;font-weight:normal;font-style:normal;transform:scaleX(0.9433);transform-origin:0 0;">E6</div>
<svg class="b" style="left:90px;top:181px;" width="8" height="5" viewBox="0 0 8 5"><polygon points="0,0 8,0 4,5" fill="#666"/></svg>
<div class="b" style="left:121px;top:179px;width:2px;height:2px;background:#9a9a9a"></div>
<div class="b" style="left:121px;top:183px;width:2px;height:2px;background:#9a9a9a"></div>
<div class="b" style="left:121px;top:187px;width:2px;height:2px;background:#9a9a9a"></div>
<div class="b" style="left:137px;top:171px;width:108px;height:24px;background:#fff;border:1px solid #c6c6c6"></div>
<svg class="b" style="left:149px;top:178px;" width="14" height="13" viewBox="0 0 14 13"><path d="M1.6,1.3 L12,11.6 M12,1.3 L1.6,11.6" stroke="#bcbcbc" stroke-width="1.8" fill="none"/></svg>
<svg class="b" style="left:185px;top:177px;" width="15" height="14" viewBox="0 0 15 14"><path d="M1.5,7.5 L5.5,11.8 L13.5,2" stroke="#c8c8c8" stroke-width="2.2" fill="none"/></svg>
<svg class="b" style="left:220px;top:176px;" width="16" height="16" viewBox="0 0 16 16"><path d="M10.6,2.6 C9.8,1.6 7.4,1.4 6.8,4 L4.6,12.6 C4.2,14 3,14.2 2.2,13.4" stroke="#444" stroke-width="1.3" fill="none"/><path d="M4.2,6.2 H9.4" stroke="#444" stroke-width="1.1"/><path d="M7.8,6.6 C9.2,6.2 9.8,7 10.3,8.6 L11.3,10.8 C11.8,11.8 12.8,11.8 13.8,11 M13.8,6.6 L7.6,11.8" stroke="#444" stroke-width="1.2" fill="none"/></svg>
<div class="b" style="left:250px;top:171px;width:1664px;height:24px;background:#fff;border:1px solid #c6c6c6"></div>
<div class="t" style="left:261.50px;top:174.50px;font-size:13px;line-height:20px;color:#222;font-weight:normal;font-style:normal;transform:scaleX(0.9682);transform-origin:0 0;">7</div>
<svg class="b" style="left:1902px;top:181px;" width="10" height="6" viewBox="0 0 10 6"><path d="M1,1 L5,5 L9,1" stroke="#666" stroke-width="1.6" fill="none"/></svg>
<div class="b" style="left:1899px;top:207px;width:19px;height:784px;background:#e6e6e6"></div>
<div class="b" style="left:1902px;top:209px;width:15px;height:15px;background:#fff;border:1px solid #ababab;box-sizing:border-box"></div>
<svg class="b" style="left:1905px;top:214px;" width="8" height="5" viewBox="0 0 8 5"><polygon points="0,4 8,4 4,0" fill="#606060"/></svg>
<div class="b" style="left:1902px;top:224px;width:15px;height:733px;background:#fff;border:1px solid #ababab;box-sizing:border-box"></div>
<div class="b" style="left:1903px;top:957px;width:13px;height:19px;background:#dadada"></div>
<div class="b" style="left:1902px;top:976px;width:15px;height:15px;background:#fff;border:1px solid #ababab;box-sizing:border-box"></div>
<svg class="b" style="left:1905px;top:982px;" width="8" height="5" viewBox="0 0 8 5"><polygon points="0,0 8,0 4,4" fill="#606060"/></svg>
<div class="b" style="left:0px;top:990px;width:1918px;height:1px;background:#a6a6a6"></div>
<div class="b" style="left:0px;top:991px;width:1918px;height:27px;background:#e6e6e6"></div>
<svg class="b" style="left:26px;top:1000px;" width="6" height="9" viewBox="0 0 6 9"><polygon points="5,0 5,8 0,4" fill="#c2c2c2"/></svg>
<svg class="b" style="left:55px;top:1000px;" width="6" height="9" viewBox="0 0 6 9"><polygon points="0,0 0,8 5,4" fill="#c2c2c2"/></svg>
<div class="b" style="left:100px;top:990px;width:227px;height:25px;background:#fff;border-left:1px solid #a6a6a6;border-right:1px solid #a6a6a6;box-sizing:border-box"></div>
<div class="b" style="left:100px;top:990px;width:227px;height:1px;background:#fff"></div>
<div class="b" style="left:100px;top:1013px;width:227px;height:2px;background:#217346"></div>
<div class="t" style="left:112.56px;top:993.34px;font-size:12px;line-height:20px;color:#217346;font-weight:bold;font-style:normal;transform:scaleX(1.0041);transform-origin:0 0;">work_logs_report__135_163249402</div>
<svg class="b" style="left:359px;top:996px;" width="17" height="17" viewBox="0 0 17 17"><circle cx="8.5" cy="8.5" r="7.6" fill="none" stroke="#666" stroke-width="1.1"/><path d="M8.5,4.5 V12.5 M4.5,8.5 H12.5" stroke="#666" stroke-width="1.3"/></svg>
<div class="b" style="left:1152px;top:999px;width:2px;height:2px;background:#9a9a9a"></div>
<div class="b" style="left:1152px;top:1003px;width:2px;height:2px;background:#9a9a9a"></div>
<div class="b" style="left:1152px;top:1007px;width:2px;height:2px;background:#9a9a9a"></div>
<div class="b" style="left:1169px;top:997px;width:15px;height:15px;background:#fff;border:1px solid #ababab;box-sizing:border-box"></div>
<svg class="b" style="left:1173px;top:1001px;" width="5" height="8" viewBox="0 0 5 8"><polygon points="4,0 4,7 0,3.5" fill="#606060"/></svg>
<div class="b" style="left:1184px;top:997px;width:661px;height:15px;background:#fff;border:1px solid #ababab;box-sizing:border-box"></div>
<div class="b" style="left:1845px;top:998px;width:39px;height:13px;background:#dadada"></div>
<div class="b" style="left:1884px;top:997px;width:15px;height:15px;background:#fff;border:1px solid #ababab;box-sizing:border-box"></div>
<svg class="b" style="left:1890px;top:1001px;" width="5" height="8" viewBox="0 0 5 8"><polygon points="0,0 0,7 4,3.5" fill="#606060"/></svg>
<div class="b" style="left:0px;top:1018px;width:1918px;height:1px;background:#c8c8c8"></div>
<div class="b" style="left:0px;top:1019px;width:1918px;height:21px;background:#f3f2f1"></div>
<div class="t" style="left:7.00px;top:1019.78px;font-size:11.6px;line-height:20px;color:#444;font-weight:normal;font-style:normal;transform:scaleX(0.9038);transform-origin:0 0;">Ready</div>
<svg class="b" style="left:57px;top:1022px;" width="15" height="14" viewBox="0 0 15 14"><rect x="0.5" y="0.5" width="13" height="3" fill="none" stroke="#555" stroke-width="1"/><path d="M0.5,3.5 V12.5 H5 M3,6 H6 M3,8.5 H5" fill="none" stroke="#555" stroke-width="1"/><circle cx="9.5" cy="9.5" r="3.8" fill="none" stroke="#555" stroke-width="1"/><circle cx="9.5" cy="9.5" r="1.6" fill="#555"/></svg>
<div class="t" style="left:1283.00px;top:1019.78px;font-size:11.6px;line-height:20px;color:#444;font-weight:normal;font-style:normal;transform:scaleX(0.9392);transform-origin:0 0;">Average: 10.75</div>
<div class="t" style="left:1373.30px;top:1019.78px;font-size:11.6px;line-height:20px;color:#444;font-weight:normal;font-style:normal;transform:scaleX(0.9898);transform-origin:0 0;">Count: 2</div>
<div class="t" style="left:1433.00px;top:1019.78px;font-size:11.6px;line-height:20px;color:#444;font-weight:normal;font-style:normal;transform:scaleX(0.9131);transform-origin:0 0;">Sum: 21.5</div>
<div class="b" style="left:1424px;top:1018px;width:64px;height:25px;border:3px solid #c80000;box-sizing:border-box;box-shadow:2px 2px 3px rgba(0,0,0,0.3), inset 1px 1px 3px rgba(0,0,0,0.3)"></div>
<svg class="b" style="left:1501px;top:1022px;" width="15" height="14" viewBox="0 0 15 14"><path d="M4,10.5 H0.6 V0.6 H13.4 V5" fill="none" stroke="#444" stroke-width="1"/><circle cx="9.5" cy="9.5" r="2.6" fill="none" stroke="#444" stroke-width="1.2"/><path d="M9.5,5 V6.5 M9.5,12.5 V14 M5,9.5 H6.5 M12.5,9.5 H14" stroke="#444" stroke-width="1.2"/></svg>
<div class="t" style="left:1519.00px;top:1019.78px;font-size:11.6px;line-height:20px;color:#444;font-weight:normal;font-style:normal;transform:scaleX(0.9811);transform-origin:0 0;">Display Settings</div>
<div class="b" style="left:1620px;top:1019px;width:40px;height:21px;background:#d4d4d4"></div>
<svg class="b" style="left:1633px;top:1022px;" width="14" height="13" viewBox="0 0 14 13"><path d="M0.6,0.6 H12.6 V12.6 H0.6 Z M0.6,4.6 H12.6 M0.6,8.6 H12.6 M4.6,0.6 V12.6 M8.6,0.6 V12.6" fill="none" stroke="#444" stroke-width="1.2"/></svg>
<svg class="b" style="left:1673px;top:1022px;" width="14" height="13" viewBox="0 0 14 13"><rect x="0.6" y="0.6" width="12.8" height="11.8" fill="none" stroke="#444" stroke-width="1.2"/><rect x="3" y="2.8" width="8" height="7.5" fill="none" stroke="#444" stroke-width="1"/><path d="M4.5,5 H9.5 M4.5,6.8 H9.5 M4.5,8.5 H9.5" stroke="#444" stroke-width="0.8"/></svg>
<svg class="b" style="left:1713px;top:1022px;" width="14" height="13" viewBox="0 0 14 13"><path d="M0.6,0.6 H13.4 V12.4 H0.6 Z M4.5,0.6 V6 H9.5 V0.6" fill="none" stroke="#444" stroke-width="1.2"/></svg>
<div class="b" style="left:1745.5px;top:1028px;width:9px;height:1px;background:#444"></div>
<div class="b" style="left:1759px;top:1028px;width:100px;height:1px;background:#a8a8a8"></div>
<div class="b" style="left:1807px;top:1024px;width:5px;height:11px;background:#777"></div>
<div class="b" style="left:1863px;top:1028px;width:9px;height:1px;background:#444"></div>
<div class="b" style="left:1867px;top:1024px;width:1px;height:9px;background:#444"></div>
<div class="t" style="left:1885.50px;top:1019.78px;font-size:11.6px;line-height:20px;color:#444;font-weight:normal;font-style:normal;transform:scaleX(0.8856);transform-origin:0 0;">100%</div>
</body></html>
